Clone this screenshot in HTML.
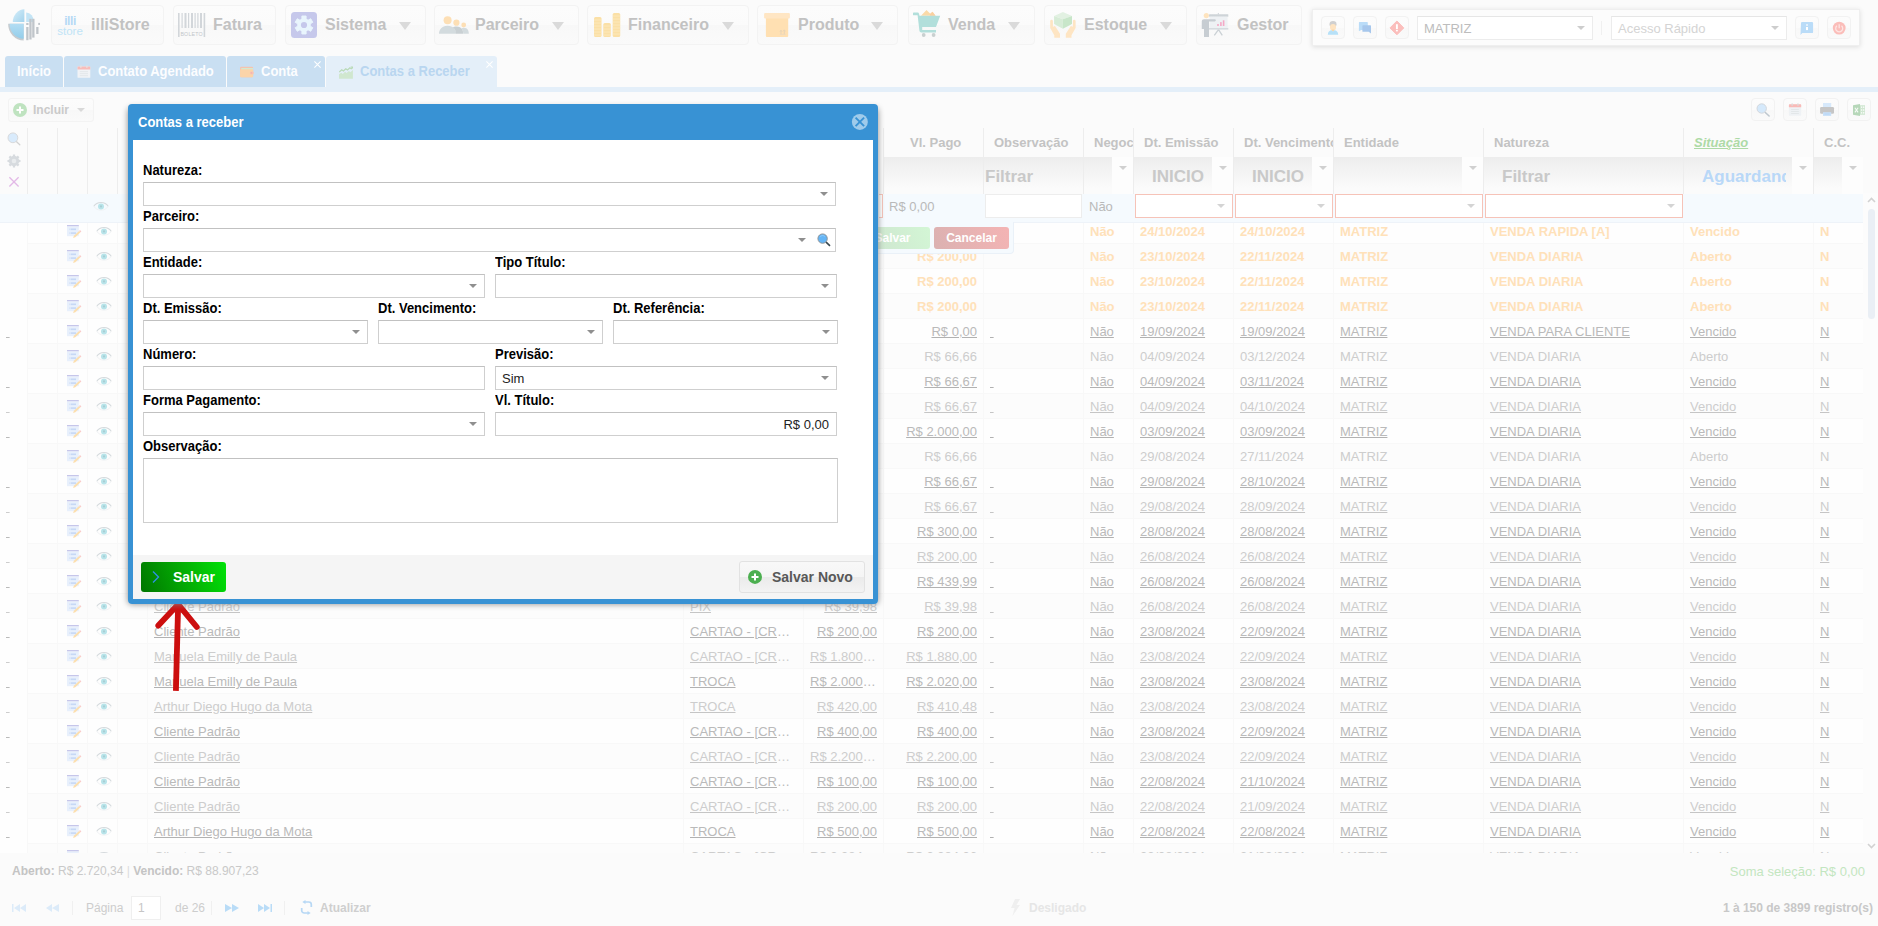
<!DOCTYPE html><html lang="pt-BR"><head><meta charset="utf-8"><title>Contas a Receber</title><style>
*{box-sizing:border-box;margin:0;padding:0}
html,body{width:1878px;height:926px;overflow:hidden;background:#fbfbfb;font-family:"Liberation Sans",Arial,sans-serif;font-size:13px;color:#b3b3b3}
.abs{position:absolute}
#page{position:relative;width:1878px;height:926px;overflow:hidden;background:#fbfbfb}
/* top nav */
.nb{position:absolute;top:5px;height:40px;border:1px solid #f3f3f3;border-radius:4px;background:linear-gradient(#fcfcfc,#fbfbfb 50%,#f8f8f8 51%,#fafafa);margin-left:1px}
.nb>*{margin-left:-1px}
.nb .t{position:absolute;top:0;line-height:37px;font-size:16px;font-weight:bold;color:#c2c2c2;white-space:nowrap}
.nb .ar{position:absolute;top:16px;width:0;height:0;border-left:6px solid transparent;border-right:6px solid transparent;border-top:8px solid #dadada}
.nb svg{position:absolute}
/* tabs */
.tab{position:absolute;top:56px;height:31px;background:#c9dff2;border-radius:3px 3px 0 0;color:#fcfdff;font-weight:bold;font-size:13px;line-height:31px;white-space:nowrap}
.tab>span.abs{transform:scaleY(1.08);transform-origin:0 19.800px}
.tab.act{background:#e4eff9;color:#b9d6f0;height:32px}
.tab .x{position:absolute;top:-7px;right:3px;font-size:11px;font-weight:normal;color:#fff}
/* grid */
.hd{position:absolute;top:128px;height:29px;line-height:30px;font-weight:bold;font-size:13px;color:#c3c3c3;white-space:nowrap;overflow:hidden;border-left:1px solid #ededed}
.fl{position:absolute;top:157px;height:37px;background:linear-gradient(#ededed,#fbfbfb 85%);border-left:1px solid #ededed;overflow:hidden;white-space:nowrap}
.fl .ph{position:absolute;top:0;line-height:40px;font-size:17px;font-weight:bold;color:#c9c9c9;letter-spacing:0}
.fl .tr{position:absolute;top:0;right:0;width:21px;height:37px;background:#fdfdfd}
.tri{position:absolute;width:0;height:0;border-left:4px solid transparent;border-right:4px solid transparent;border-top:4px solid #d0d0d0}
.row{position:absolute;left:27px;width:1836px;height:25px;border-top:1px solid #f8f8f8;background:#fefefe}
.row.alt{background:#fcfcfc}
.c{position:absolute;top:0;height:25px;line-height:26px;font-size:13px;white-space:nowrap;overflow:hidden;text-overflow:ellipsis;padding:0 6px 0 6px;border-left:1px solid #f8f8f8}
.u span{text-decoration:underline}
.r{text-align:right}
.dk{color:#bababa}.lt{color:#cdcdcd}
.dk.u span{text-decoration-color:#b1b1b1}.lt.u span{text-decoration-color:#c5c5c5}
.or{color:#ffe1b9;font-weight:bold}
.ic{position:absolute}
/* modal */
#win{position:absolute;left:128px;top:104px;width:750px;height:500px;background:#3892d4;border-radius:4px;}
#win .title{position:absolute;left:10px;top:11px;font-size:13px;font-weight:bold;color:#fff;line-height:16px;transform:scaleY(1.13);transform-origin:0 12.500px}
#win .body{position:absolute;left:5px;top:36px;width:740px;height:415px;background:#fff}
#win .foot{position:absolute;left:5px;top:451px;width:740px;height:44px;background:#f5f5f5}
.lb{position:absolute;margin-top:1px;font-size:13px;font-weight:bold;color:#000;line-height:14px;white-space:nowrap;transform:scaleY(1.1);transform-origin:0 11.300px}
.in{position:absolute;height:24px;border:1px solid #cfcfcf;border-top-color:#c1c1c1;background:#fff}
.in .tri{border-top-color:#8f8f8f;border-left-width:4px;border-right-width:4px;border-top-width:4px}
.in .v{position:absolute;top:0;line-height:24px;font-size:13px;color:#222}
</style></head><body><div id="page">
<svg class="abs" style="left:7px;top:8px" width="35" height="35" viewBox="7 8 35 35"><defs><linearGradient id="lg" x1="0" y1="0" x2="1" y2="1"><stop offset="0" stop-color="#d6eefa"/><stop offset="1" stop-color="#a3d3ec"/></linearGradient><linearGradient id="lg2" x1="0" y1="0" x2="0" y2="1"><stop offset="0" stop-color="#b3ddf3"/><stop offset="1" stop-color="#93cdea"/></linearGradient></defs><path d="M23.700 23.800H8.200A16 16.400 0 0 0 23.700 40.600z" fill="#c6cbcf"/><path d="M23.700 23.800H9.600A14.500 14.800 0 0 0 23.700 38.800z" fill="url(#lg2)"/><path d="M24.400 21.900V9.300A12.200 12.600 0 0 0 12.800 21.900z" fill="url(#lg)"/><path d="M26.200 21.900V12.400A8 9.500 0 0 1 33.900 21.900z" fill="#c3e4f5"/><g fill="#c0c5ca"><rect x="26.200" y="27" width="2.300" height="13.200"/><rect x="29.300" y="18.800" width="2.300" height="20.700"/><rect x="32.200" y="18.800" width="2.300" height="18.800"/><rect x="36.200" y="27" width="2.300" height="7"/><rect x="38.200" y="22.900" width="1.800" height="2"/><rect x="26.200" y="23" width="2.300" height="2"/></g></svg>
<div class="nb" style="left:50px;width:113px"><svg style="left:5px;top:9px" width="28" height="22" viewBox="0 0 28 22"><text x="14" y="9.800" font-family="Liberation Sans" font-size="12" font-weight="bold" fill="#b4d9f5" text-anchor="middle" letter-spacing="-.4">illi</text><text x="1.200" y="19.600" font-family="Liberation Sans" font-size="10" fill="#c0e4f7" textLength="25.600" lengthAdjust="spacingAndGlyphs">store</text></svg><span class="t" style="left:40px">illiStore</span></div>
<div class="nb" style="left:172px;width:103px"><svg style="left:5px;top:7px" width="28" height="25" viewBox="0 0 28 25"><g fill="#d2d6da"><rect x="0" y="0" width="1.600" height="24"/><rect x="3.500" y="0" width="1.200" height="15"/><rect x="6.500" y="0" width="2" height="15"/><rect x="10" y="0" width="1.200" height="15"/><rect x="13" y="0" width="2" height="15"/><rect x="16.500" y="0" width="1.200" height="15"/><rect x="19.300" y="0" width="1.200" height="15"/><rect x="22" y="0" width="2" height="15"/><rect x="25.600" y="0" width="1.600" height="24"/></g><text x="13.600" y="22.800" font-family="Liberation Sans" font-size="5.300" fill="#c2c6ca" text-anchor="middle" letter-spacing=".15">BOLETO</text></svg><span class="t" style="left:40px">Fatura</span></div>
<div class="nb" style="left:284px;width:141px"><svg style="left:6px;top:6px" width="26" height="26" viewBox="0 0 26 26"><rect width="26" height="26" rx="3.500" fill="#c6c8eb"/><path d="M15.07 18.84L15.11 21.95L10.89 21.95L10.93 18.84L8.97 17.71L6.30 19.30L4.19 15.65L6.90 14.13L6.90 11.87L4.19 10.35L6.30 6.70L8.97 8.29L10.93 7.16L10.89 4.05L15.11 4.05L15.07 7.16L17.03 8.29L19.70 6.70L21.81 10.35L19.10 11.87L19.10 14.13L21.81 15.65L19.70 19.30L17.03 17.71z" fill="#e9f5fd" stroke="#e9f5fd" stroke-width="1" stroke-linejoin="round"/><circle cx="13" cy="13" r="6.400" fill="#e9f5fd"/><circle cx="13" cy="13" r="3.100" fill="#c6c8eb"/></svg><span class="t" style="left:40px">Sistema</span><i class="ar" style="left:114px"></i></div>
<div class="nb" style="left:433px;width:145px"><svg style="left:5px;top:10px" width="32" height="20" viewBox="0 0 32 20"><circle cx="8.600" cy="4.200" r="4" fill="#fddfb5"/><circle cx="17.400" cy="6.700" r="3.100" fill="#fddfb5"/><circle cx="24.700" cy="9" r="2.400" fill="#fddfb5"/><path d="M0 17.800c0-1 0-2.300 1-4 1.500-2.700 4.500-4 7.600-4s6 1.300 7.500 4c1 1.700 1 3 1 4z" fill="#d3dbde"/><path d="M13.500 11.600c1.200-.9 2.500-1.200 3.900-1.200 2.600 0 4.800 1.100 5.900 3.200.8 1.500.8 2.900.8 4.200H17c0-1.500-.3-2.800-1-4-.6-1-1.300-1.700-2.500-2.200z" fill="#c9d0d3"/><path d="M22.300 12.400c.7-.4 1.500-.6 2.400-.6 1.900 0 3.500.8 4.400 2.400.6 1.100.7 2.400.7 3.600h-5.600c0-1.300 0-2.600-.7-3.900-.3-.6-.7-1.100-1.200-1.500z" fill="#d3dbde"/></svg><span class="t" style="left:41px">Parceiro</span><i class="ar" style="left:118px"></i></div>
<div class="nb" style="left:586px;width:162px"><svg style="left:7px;top:7px" width="28" height="26" viewBox="0 0 28 26"><g fill="#fbe0a6"><rect x="0" y="4" width="7.500" height="20" rx="1.500"/><rect x="9.300" y="10" width="7.500" height="14" rx="1.500"/><rect x="18.700" y="0" width="7.500" height="24" rx="1.500"/></g><g stroke="#fdebc4" stroke-width=".7"><path d="M0 7h7.500M0 10h7.500M0 13h7.500M0 16h7.500M0 19h7.500M0 22h7.500M9.300 13h7.500M9.300 16h7.500M9.300 19h7.500M9.300 22h7.500M18.700 3h7.500M18.700 6h7.500M18.700 9h7.500M18.700 12h7.500M18.700 15h7.500M18.700 18h7.500M18.700 21h7.500"/></g></svg><span class="t" style="left:41px">Financeiro</span><i class="ar" style="left:135px"></i></div>
<div class="nb" style="left:756px;width:141px"><svg style="left:7px;top:7px" width="26" height="24" viewBox="0 0 26 24"><rect x="1.900" y="4" width="22.300" height="20" rx="1" fill="#ffe0b2"/><rect x=".1" y="0" width="25.800" height="5.400" rx="1" fill="#ffe6c4"/><path d="M17 21.200V17.800M16 18.600l1-1.400 1 1.400M20.300 21.200V17.300M19.200 18.300l1.100-1.500 1.100 1.500" stroke="#e4d2b8" stroke-width=".9" fill="none"/><rect x="15.800" y="20.900" width="5.800" height=".8" fill="#ead9c0"/></svg><span class="t" style="left:41px">Produto</span><i class="ar" style="left:114px"></i></div>
<div class="nb" style="left:907px;width:127px"><svg style="left:5px;top:4px" width="28" height="28" viewBox="0 0 28 28"><path d="M8 5.800L13.500 0l3.800 3.800 2.200-2 3 4z" fill="#fbdaa8"/><path d="M17 4l2.500-2.200 3 4H17z" fill="#fad0a0"/><path d="M1 2.400h3.600c.8 0 1.300.6 1.400 1.300L6.500 5.800h20.700L23 17H9.200v2.900H23v2.500H8.300c-1.100 0-1.900-.9-1.900-1.900L4.600 5.300H1a1 1 0 0 1 0-2.900z" fill="#b2dfdb"/><circle cx="10.700" cy="25" r="1.900" fill="#c9d0d0"/><circle cx="20.600" cy="25" r="1.900" fill="#c9d0d0"/></svg><span class="t" style="left:40px">Venda</span><i class="ar" style="left:100px"></i></div>
<div class="nb" style="left:1043px;width:143px"><svg style="left:5px;top:5px" width="28" height="28" viewBox="0 0 28 28"><path d="M13.900.900L23 5l-9.100 3.200L5.060 5z" fill="#e2f1e2"/><path d="M5.060 5l8.840 3.200v9.500l-8.840-4.750z" fill="#d7ecd7"/><path d="M23 5l-9.100 3.200v9.500L23 12.950z" fill="#c8e6c9"/><path d="M1.200 10.200a1.350 1.350 0 0 1 2.700 0v5.500l2.100-.7 5 7.700v4.100H5.300v-2.500L1.200 17z" fill="#fee5c3"/><path d="M26.600 10.200a1.350 1.350 0 0 0-2.700 0v5.500l-2.100-.7-5 7.700v4.100h5.700v-2.500L26.600 17z" fill="#fee5c3"/></svg><span class="t" style="left:40px">Estoque</span><i class="ar" style="left:116px"></i></div>
<div class="nb" style="left:1195px;width:106px"><svg style="left:5px;top:6px" width="28" height="26" viewBox="0 0 28 26"><rect x="16.800" y="1.200" width="1.200" height="1.200" fill="#cdd3d7"/><rect x="8" y="2.200" width="19.300" height="2.500" rx=".5" fill="#ced4d8"/><rect x="8.500" y="4.700" width="18.100" height="11.300" fill="#eef1f4"/><rect x="8" y="16" width="19.300" height="1.600" fill="#d6dbdf"/><path d="M17.500 17.600L13.300 23.300M17.500 17.600l3.800 5.700" stroke="#cbd1d5" stroke-width="1.300" fill="none"/><g fill="#f4a9c6"><rect x="16.200" y="12" width="1.600" height="2"/><rect x="19.100" y="10.100" width="1.600" height="3.900"/><rect x="21.800" y="8.300" width="1.600" height="5.700"/></g><circle cx="5.300" cy="3.600" r="2.600" fill="#fee4bf"/><path d="M.75 9.400c0-1.300 1-2.200 2.250-2.200h10.700a1.150 1.150 0 0 1 0 2.300H8v15.400H3v-8H.75z" fill="#c7cdd2"/></svg><span class="t" style="left:41px">Gestor</span></div>
<div class="abs" style="left:1312px;top:9px;width:548px;height:37px;background:#fcfcfc;border:1px solid #efefef;box-shadow:0 1px 5px rgba(0,0,0,.12)"></div>
<div class="abs" style="left:1321px;top:16px;width:24px;height:23px;border:1px solid #f2f2f2;border-radius:4px;background:linear-gradient(#fcfcfc,#fbfbfb 50%,#f8f8f8 51%,#fafafa);overflow:hidden"><svg class="abs" style="left:0;top:0" width="22" height="21" viewBox="1322 17 22 21"><ellipse cx="1333" cy="24.300" rx="3.500" ry="3.300" fill="#d0d0d0"/><ellipse cx="1333" cy="27.200" rx="3" ry="3.300" fill="#fee4c2"/><rect x="1331.800" y="29.500" width="2.400" height="2" fill="#fbd5a5"/><path d="M1327.800 34.800c0-3 1.800-4.300 3.800-4.500l1.400 1.200 1.400-1.200c2 .2 3.800 1.500 3.800 4.500z" fill="#b7e1f8"/></svg></div>
<div class="abs" style="left:1353px;top:16px;width:24px;height:23px;border:1px solid #f2f2f2;border-radius:4px;background:linear-gradient(#fcfcfc,#fbfbfb 50%,#f8f8f8 51%,#fafafa);overflow:hidden"><svg class="abs" style="left:0;top:0" width="22" height="21" viewBox="1354 17 22 21"><path d="M1358.900 22.700a.6.600 0 0 1 .6-.6h7.700a.6.600 0 0 1 .6.600v7.200h-6.600l-2.300 1.300z" fill="#badcf8"/><path d="M1362.400 25.900a.6.600 0 0 1 .6-.6h7.400a.6.600 0 0 1 .6.600v7.700l-2.300-1.800h-5.700a.6.600 0 0 1-.6-.6z" fill="#a7c7ec"/></svg></div>
<div class="abs" style="left:1385px;top:16px;width:24px;height:23px;border:1px solid #f2f2f2;border-radius:4px;background:linear-gradient(#fcfcfc,#fbfbfb 50%,#f8f8f8 51%,#fafafa);overflow:hidden"><svg class="abs" style="left:0;top:0" width="22" height="21" viewBox="1386 17 22 21"><path d="M1396.900 21l6.900 6.900-6.900 6.900-6.900-6.900z" fill="#fbbebc" stroke="#fbbebc" stroke-width="1" stroke-linejoin="round"/><rect x="1395.950" y="24.200" width="1.900" height="4.900" fill="#fff"/><rect x="1395.950" y="29.900" width="1.900" height="1.500" fill="#fff"/></svg></div>
<div class="abs" style="left:1417px;top:16px;width:176px;height:24px;border:1px solid #ececec;border-top-color:#e6e6e6;background:#fff"><span class="abs" style="left:6px;top:0;line-height:23px;font-size:13px;color:#bdbdbd">MATRIZ</span><i class="tri" style="right:7px;top:9px;border-top-color:#cdcdcd;border-left-width:4px;border-right-width:4px;border-top-width:4px"></i></div>
<div class="abs" style="left:1601px;top:21px;width:1px;height:14px;background:#f0f0f0"></div>
<div class="abs" style="left:1611px;top:16px;width:176px;height:24px;border:1px solid #ececec;border-top-color:#e6e6e6;background:#fff"><span class="abs" style="left:6px;top:0;line-height:23px;font-size:13px;color:#d4d4d4">Acesso Rápido</span><i class="tri" style="right:7px;top:9px;border-top-color:#cdcdcd;border-left-width:4px;border-right-width:4px;border-top-width:4px"></i></div>
<div class="abs" style="left:1795px;top:16px;width:24px;height:23px;border:1px solid #f2f2f2;border-radius:4px;background:linear-gradient(#fcfcfc,#fbfbfb 50%,#f8f8f8 51%,#fafafa);overflow:hidden"><svg class="abs" style="left:0;top:0" width="22" height="21" viewBox="1796 17 22 21"><path d="M1801 23.100a1.200 1.200 0 0 1 1.200-1.200h9.700a1.200 1.200 0 0 1 1.200 1.200v8.800a1.200 1.200 0 0 1-1.200 1.200h-9.600l-1.800 1.900z" fill="#badcf8"/><rect x="1806" y="24.200" width="2" height="1.600" fill="#e9f4fd"/><rect x="1806" y="27" width="2" height="3.100" fill="#fff"/></svg></div>
<div class="abs" style="left:1827px;top:16px;width:24px;height:23px;border:1px solid #f2f2f2;border-radius:4px;background:linear-gradient(#fcfcfc,#fbfbfb 50%,#f8f8f8 51%,#fafafa);overflow:hidden"><svg class="abs" style="left:0;top:0" width="22" height="21" viewBox="1828 17 22 21"><circle cx="1839.200" cy="28.100" r="6.400" fill="#fbbdb9"/><path d="M1836.900 25.700a3.500 3.500 0 1 0 4.600 0" fill="none" stroke="#fde5e3" stroke-width="1.300"/><path d="M1839.200 24.300v4" stroke="#fde5e3" stroke-width="1.300"/></svg></div>
<div class="abs" style="left:0;top:87px;width:1878px;height:5px;background:#e4eff9"></div>
<div class="tab" style="left:5px;width:58px"><span class="abs" style="left:12px">Início</span></div>
<div class="tab" style="left:64px;width:162px"><svg class="abs" style="left:13px;top:8px" width="14" height="15" viewBox="0 0 14 15"><rect x=".5" y="2.400" width="12.800" height="11.400" rx=".6" fill="#f1f3f6"/><path d="M.5 3a.6.600 0 0 1 .6-.6h11.600a.6.600 0 0 1 .6.600v2.400H.5z" fill="#f8bcb9"/><rect x="3.200" y="1.400" width="1.300" height="2.400" fill="#e3e3e3"/><rect x="9.200" y="1.400" width="1.300" height="2.400" fill="#e3e3e3"/><path d="M2.800 7.700h8.200M2.800 9.700h8.200M2.800 11.700h8.200" stroke="#e2e5e9" stroke-width=".9"/></svg><span class="abs" style="left:34px">Contato Agendado</span></div>
<div class="tab" style="left:227px;width:98px"><svg class="abs" style="left:13px;top:10px" width="15" height="12" viewBox="0 0 15 12"><rect x=".1" y=".8" width="13" height="10.400" rx="1.200" fill="#f5c3ae"/><rect x="1.200" y="2" width="11.800" height="2" fill="#d3e9d2"/><rect x=".1" y="3.200" width="13" height="8" rx="1" fill="#fbd4a9"/><rect x="9.800" y="5.400" width="4.100" height="3" rx="1.400" fill="#f9c6b4"/><circle cx="11.500" cy="6.900" r=".9" fill="#f3b3b3"/></svg><span class="abs" style="left:34px">Conta</span><svg class="abs" style="right:4.400px;top:5.300px" width="7" height="7" viewBox="0 0 7 7"><path d="M.4.400l6.200 6.200M6.600.4L.4 6.600" stroke="#fff" stroke-width="1.050"/></svg></div>
<div class="tab act" style="left:326px;width:171px"><svg class="abs" style="left:13px;top:10px" width="15" height="13" viewBox="0 0 15 13"><path d="M0 12.700V8.300l2.200-1.600 1.600 1.200L6 5.800l1.600 1.300 2.300-2 1.500 1.100 2.500-2.300v8.800z" fill="#d0e7cf"/><path d="M.3 6l2.400-2.200 1.700 1.200 2.400-2.300 1.700 1.300 2.400-2.200 1.300 1 1.500-1.600" fill="none" stroke="#b9dab6" stroke-width="1.200"/><path d="M11.500.6l2.400-.1-.1 2.400z" fill="#b9dab6"/></svg><span class="abs" style="left:34px">Contas a Receber</span><svg class="abs" style="right:4.400px;top:5.300px" width="7" height="7" viewBox="0 0 7 7"><path d="M.4.400l6.200 6.200M6.600.4L.4 6.600" stroke="#fff" stroke-width="1.050"/></svg></div>
<div class="abs" style="left:8px;top:98px;width:86px;height:24px;border:1px solid #f3f3f3;border-radius:3px;background:linear-gradient(#fcfcfc,#fbfbfb 50%,#f8f8f8 51%,#fafafa)"><svg class="abs" style="left:4px;top:4px" width="14" height="14" viewBox="0 0 14 14"><circle cx="7" cy="7" r="7" fill="#bfe3c0"/><path d="M7 3.500v7M3.500 7h7" stroke="#fff" stroke-width="2"/></svg><span class="abs" style="left:24px;top:0;line-height:22px;font-size:12px;font-weight:bold;color:#cacaca">Incluir</span><i class="tri" style="left:68px;top:9px;border-top-color:#d9d9d9"></i></div>
<div class="abs" style="left:1751px;top:98px;width:24px;height:23px;border:1px solid #f2f2f2;border-radius:4px;background:linear-gradient(#fcfcfc,#fbfbfb 50%,#f8f8f8 51%,#fafafa);overflow:hidden"><svg class="abs" style="left:0;top:0" width="22" height="21" viewBox="1752 99 22 21"><path d="M1765.300 112.500l3.800 3.500" stroke="#bfc8cf" stroke-width="1.600" stroke-linecap="round"/><circle cx="1761.700" cy="108.500" r="4.700" fill="#d5e9fb" stroke="#d0d4d8" stroke-width=".9"/></svg></div>
<div class="abs" style="left:1783px;top:98px;width:24px;height:23px;border:1px solid #f2f2f2;border-radius:4px;background:linear-gradient(#fcfcfc,#fbfbfb 50%,#f8f8f8 51%,#fafafa);overflow:hidden"><svg class="abs" style="left:0;top:0" width="22" height="21" viewBox="1784 99 22 21"><rect x="1788.900" y="104.300" width="12.300" height="11.400" rx=".6" fill="#eff2f5"/><path d="M1788.900 104.900a.6.600 0 0 1 .6-.6h11.100a.6.600 0 0 1 .6.600v2.300h-12.300z" fill="#f9bab7"/><rect x="1791.500" y="103.400" width="1.300" height="2.400" fill="#dcdcdc"/><rect x="1797.300" y="103.400" width="1.300" height="2.400" fill="#dcdcdc"/><path d="M1791.100 109.500h7.800M1791.100 111.500h7.800M1791.100 113.500h7.800" stroke="#e1e5e8" stroke-width=".9"/></svg></div>
<div class="abs" style="left:1815px;top:98px;width:24px;height:23px;border:1px solid #f2f2f2;border-radius:4px;background:linear-gradient(#fcfcfc,#fbfbfb 50%,#f8f8f8 51%,#fafafa);overflow:hidden"><svg class="abs" style="left:0;top:0" width="22" height="21" viewBox="1816 99 22 21"><rect x="1823" y="103" width="8.200" height="4.500" fill="#d7e9fb"/><rect x="1820.100" y="107.100" width="13.900" height="6.700" rx="1.200" fill="#c6c6c6"/><rect x="1823" y="112.200" width="8.200" height="3.700" fill="#c7dff8"/><rect x="1824.500" y="113.600" width="5.200" height=".8" fill="#b5d2f3"/></svg></div>
<div class="abs" style="left:1847px;top:98px;width:24px;height:23px;border:1px solid #f2f2f2;border-radius:4px;background:linear-gradient(#fcfcfc,#fbfbfb 50%,#f8f8f8 51%,#fafafa);overflow:hidden"><svg class="abs" style="left:0;top:0" width="22" height="21" viewBox="1848 99 22 21"><rect x="1859" y="105.200" width="6" height="9.600" fill="#d0e6d1"/><g fill="#f4faf4"><rect x="1861" y="106.400" width="1.200" height="1.600"/><rect x="1863" y="106.400" width="1.300" height="1.600"/><rect x="1861" y="109.200" width="1.200" height="1.600"/><rect x="1863" y="109.200" width="1.300" height="1.600"/><rect x="1861" y="112" width="1.200" height="1.600"/><rect x="1863" y="112" width="1.300" height="1.600"/></g><path d="M1853 105.200l7-1.100v11.800l-7-1.100z" fill="#b6d7b9"/><path d="M1854.900 107.800l3.200 4.600M1858.100 107.800l-3.200 4.600" stroke="#f4faf4" stroke-width="1.100"/></svg></div>
<svg class="abs" style="left:4px;top:130px" width="20" height="60" viewBox="4 130 20 60"><path d="M16.300 141.500l3.500 3.300" stroke="#d2d2d2" stroke-width="1.300" stroke-linecap="round"/><circle cx="12.900" cy="137.800" r="4.900" fill="#d9ebfc" stroke="#d6d6d6" stroke-width=".9"/><path d="M18.76 159.86L20.51 159.90L20.51 162.10L18.76 162.14L18.18 163.56L19.38 164.83L17.83 166.38L16.56 165.18L15.14 165.76L15.10 167.51L12.90 167.51L12.86 165.76L11.44 165.18L10.17 166.38L8.62 164.83L9.82 163.56L9.24 162.14L7.49 162.10L7.49 159.90L9.24 159.86L9.82 158.44L8.62 157.17L10.17 155.62L11.44 156.82L12.86 156.24L12.90 154.49L15.10 154.49L15.14 156.24L16.56 156.82L17.83 155.62L19.38 157.17L18.18 158.44z" fill="#d7dbdf"/><circle cx="14" cy="161" r="5" fill="#d7dbdf"/><circle cx="14" cy="161" r="2.300" fill="#e9ecee"/><path d="M9.400 177.200l9.200 9.300M18.600 177.200l-9.200 9.300" stroke="#e3b9e7" stroke-width="1.300"/></svg>
<div class="hd" style="left:27px;width:30px"></div>
<div class="hd" style="left:57px;width:30px"></div>
<div class="hd" style="left:87px;width:30px"></div>
<div class="hd" style="left:117px;width:30px"></div>
<div class="hd" style="left:883px;width:100px"><span class="abs" style="left:26px">Vl. Pago</span></div>
<div class="hd" style="left:983px;width:100px"><span class="abs" style="left:10px">Observação</span></div>
<div class="hd" style="left:1083px;width:50px"><span class="abs" style="left:10px">Negoc</span></div>
<div class="hd" style="left:1133px;width:100px"><span class="abs" style="left:10px">Dt. Emissão</span></div>
<div class="hd" style="left:1233px;width:100px"><span class="abs" style="left:10px">Dt. Vencimento</span></div>
<div class="hd" style="left:1333px;width:150px"><span class="abs" style="left:10px">Entidade</span></div>
<div class="hd" style="left:1483px;width:200px"><span class="abs" style="left:10px">Natureza</span></div>
<div class="hd" style="left:1683px;width:130px"><span class="abs" style="left:10px;font-size:13px;font-weight:bold;font-style:italic;text-decoration:underline;color:#addaa6">Situação</span></div>
<div class="hd" style="left:1813px;width:50px"><span class="abs" style="left:10px">C.C.</span></div>
<div class="abs" style="left:27px;top:157px;width:1px;height:37px;background:#ededed"></div>
<div class="abs" style="left:57px;top:157px;width:1px;height:37px;background:#ededed"></div>
<div class="abs" style="left:87px;top:157px;width:1px;height:37px;background:#ededed"></div>
<div class="abs" style="left:117px;top:157px;width:1px;height:37px;background:#ededed"></div>
<div class="fl" style="left:883px;width:100px"></div>
<div class="fl" style="left:983px;width:100px"><span class="ph" style="left:1px">Filtrar</span></div>
<div class="fl" style="left:1083px;width:50px"><div class="tr"><i class="tri" style="left:7px;top:9px"></i></div></div>
<div class="fl" style="left:1133px;width:100px"><span class="ph" style="left:18px">INICIO</span><div class="tr"><i class="tri" style="left:7px;top:9px"></i></div></div>
<div class="fl" style="left:1233px;width:100px"><span class="ph" style="left:18px">INICIO</span><div class="tr"><i class="tri" style="left:7px;top:9px"></i></div></div>
<div class="fl" style="left:1333px;width:150px"><div class="tr"><i class="tri" style="left:7px;top:9px"></i></div></div>
<div class="fl" style="left:1483px;width:200px"><span class="ph" style="left:18px">Filtrar</span></div>
<div class="fl" style="left:1683px;width:130px"><span class="ph" style="left:18px;color:#b9d8f8;width:84px;overflow:hidden">Aguardando</span><div class="tr"><i class="tri" style="left:7px;top:9px"></i></div></div>
<div class="fl" style="left:1813px;width:50px"><div class="tr"><i class="tri" style="left:7px;top:9px"></i></div></div>
<div class="abs" style="left:0;top:219px;width:1863px;height:634px;overflow:hidden;background:#fefefe">
<div class="row or" style="top:-1px"><div class="c" style="left:0px;width:30px;padding:0"></div><div class="c" style="left:30px;width:30px;padding:0"></div><div class="c" style="left:60px;width:30px;padding:0"></div><div class="c" style="left:90px;width:30px;padding:0"></div><svg class="ic" style="left:40px;top:6px" width="15" height="14" viewBox="0 0 15 14"><rect x="0" y="0" width="11.800" height="1.500" fill="#c6c6ea"/><rect x="0" y="1.500" width="11.800" height="9.700" fill="#e8f0fc"/><rect x="3.600" y="3.500" width="5.400" height="1.600" fill="#c6d8f5"/><rect x="3.600" y="7.300" width="5.400" height="1.600" fill="#c6d8f5"/><rect x="2" y="3.500" width=".8" height="1.600" fill="#d5e2f8"/><rect x="2" y="7.300" width=".8" height="1.600" fill="#d5e2f8"/><path d="M6.100 13l.8-2.200 5.200-4.900 1.400 1.400-5.200 4.900z" fill="#fcdfae"/><path d="M12.100 5.900l.9-.9 1.400 1.400-.9.900z" fill="#f8caca"/></svg><svg class="ic" style="left:69px;top:7px" width="16" height="11" viewBox="0 0 16 11"><path d="M.8 5.300C4 .2 12 .2 15.200 5.300" fill="none" stroke="#d5dadd" stroke-width="1.100"/><path d="M.8 5.300C4 10.500 12 10.500 15.200 5.300" fill="none" stroke="#eceff1" stroke-width=".8"/><circle cx="8" cy="5.400" r="3" fill="#b8e4ea"/><circle cx="8" cy="5.400" r="1.100" fill="#a9cdd3"/></svg><div class="c" style="left:120px;width:536px"></div><div class="c" style="left:656px;width:120px"></div><div class="c r" style="left:776px;width:80px"></div><div class="c r" style="left:856px;width:100px"></div><div class="c" style="left:956px;width:100px"><span> </span></div><div class="c" style="left:1056px;width:50px"><span>Não</span></div><div class="c" style="left:1106px;width:100px"><span>24/10/2024</span></div><div class="c" style="left:1206px;width:100px"><span>24/10/2024</span></div><div class="c" style="left:1306px;width:150px"><span>MATRIZ</span></div><div class="c" style="left:1456px;width:200px"><span>VENDA RAPIDA [A]</span></div><div class="c" style="left:1656px;width:130px"><span>Vencido</span></div><div class="c" style="left:1786px;width:50px"><span>N</span></div></div>
<div class="row or alt" style="top:24px"><div class="c" style="left:0px;width:30px;padding:0"></div><div class="c" style="left:30px;width:30px;padding:0"></div><div class="c" style="left:60px;width:30px;padding:0"></div><div class="c" style="left:90px;width:30px;padding:0"></div><svg class="ic" style="left:40px;top:6px" width="15" height="14" viewBox="0 0 15 14"><rect x="0" y="0" width="11.800" height="1.500" fill="#c6c6ea"/><rect x="0" y="1.500" width="11.800" height="9.700" fill="#e8f0fc"/><rect x="3.600" y="3.500" width="5.400" height="1.600" fill="#c6d8f5"/><rect x="3.600" y="7.300" width="5.400" height="1.600" fill="#c6d8f5"/><rect x="2" y="3.500" width=".8" height="1.600" fill="#d5e2f8"/><rect x="2" y="7.300" width=".8" height="1.600" fill="#d5e2f8"/><path d="M6.100 13l.8-2.200 5.200-4.900 1.400 1.400-5.200 4.900z" fill="#fcdfae"/><path d="M12.100 5.900l.9-.9 1.400 1.400-.9.900z" fill="#f8caca"/></svg><svg class="ic" style="left:69px;top:7px" width="16" height="11" viewBox="0 0 16 11"><path d="M.8 5.300C4 .2 12 .2 15.200 5.300" fill="none" stroke="#d5dadd" stroke-width="1.100"/><path d="M.8 5.300C4 10.500 12 10.500 15.200 5.300" fill="none" stroke="#eceff1" stroke-width=".8"/><circle cx="8" cy="5.400" r="3" fill="#b8e4ea"/><circle cx="8" cy="5.400" r="1.100" fill="#a9cdd3"/></svg><div class="c" style="left:120px;width:536px"></div><div class="c" style="left:656px;width:120px"></div><div class="c r" style="left:776px;width:80px"></div><div class="c r" style="left:856px;width:100px"><span>R$ 200,00</span></div><div class="c" style="left:956px;width:100px"></div><div class="c" style="left:1056px;width:50px"><span>Não</span></div><div class="c" style="left:1106px;width:100px"><span>23/10/2024</span></div><div class="c" style="left:1206px;width:100px"><span>22/11/2024</span></div><div class="c" style="left:1306px;width:150px"><span>MATRIZ</span></div><div class="c" style="left:1456px;width:200px"><span>VENDA DIARIA</span></div><div class="c" style="left:1656px;width:130px"><span>Aberto</span></div><div class="c" style="left:1786px;width:50px"><span>N</span></div></div>
<div class="row or" style="top:49px"><div class="c" style="left:0px;width:30px;padding:0"></div><div class="c" style="left:30px;width:30px;padding:0"></div><div class="c" style="left:60px;width:30px;padding:0"></div><div class="c" style="left:90px;width:30px;padding:0"></div><svg class="ic" style="left:40px;top:6px" width="15" height="14" viewBox="0 0 15 14"><rect x="0" y="0" width="11.800" height="1.500" fill="#c6c6ea"/><rect x="0" y="1.500" width="11.800" height="9.700" fill="#e8f0fc"/><rect x="3.600" y="3.500" width="5.400" height="1.600" fill="#c6d8f5"/><rect x="3.600" y="7.300" width="5.400" height="1.600" fill="#c6d8f5"/><rect x="2" y="3.500" width=".8" height="1.600" fill="#d5e2f8"/><rect x="2" y="7.300" width=".8" height="1.600" fill="#d5e2f8"/><path d="M6.100 13l.8-2.200 5.200-4.900 1.400 1.400-5.200 4.900z" fill="#fcdfae"/><path d="M12.100 5.900l.9-.9 1.400 1.400-.9.900z" fill="#f8caca"/></svg><svg class="ic" style="left:69px;top:7px" width="16" height="11" viewBox="0 0 16 11"><path d="M.8 5.300C4 .2 12 .2 15.200 5.300" fill="none" stroke="#d5dadd" stroke-width="1.100"/><path d="M.8 5.300C4 10.500 12 10.500 15.200 5.300" fill="none" stroke="#eceff1" stroke-width=".8"/><circle cx="8" cy="5.400" r="3" fill="#b8e4ea"/><circle cx="8" cy="5.400" r="1.100" fill="#a9cdd3"/></svg><div class="c" style="left:120px;width:536px"></div><div class="c" style="left:656px;width:120px"></div><div class="c r" style="left:776px;width:80px"></div><div class="c r" style="left:856px;width:100px"><span>R$ 200,00</span></div><div class="c" style="left:956px;width:100px"></div><div class="c" style="left:1056px;width:50px"><span>Não</span></div><div class="c" style="left:1106px;width:100px"><span>23/10/2024</span></div><div class="c" style="left:1206px;width:100px"><span>22/11/2024</span></div><div class="c" style="left:1306px;width:150px"><span>MATRIZ</span></div><div class="c" style="left:1456px;width:200px"><span>VENDA DIARIA</span></div><div class="c" style="left:1656px;width:130px"><span>Aberto</span></div><div class="c" style="left:1786px;width:50px"><span>N</span></div></div>
<div class="row or alt" style="top:74px"><div class="c" style="left:0px;width:30px;padding:0"></div><div class="c" style="left:30px;width:30px;padding:0"></div><div class="c" style="left:60px;width:30px;padding:0"></div><div class="c" style="left:90px;width:30px;padding:0"></div><svg class="ic" style="left:40px;top:6px" width="15" height="14" viewBox="0 0 15 14"><rect x="0" y="0" width="11.800" height="1.500" fill="#c6c6ea"/><rect x="0" y="1.500" width="11.800" height="9.700" fill="#e8f0fc"/><rect x="3.600" y="3.500" width="5.400" height="1.600" fill="#c6d8f5"/><rect x="3.600" y="7.300" width="5.400" height="1.600" fill="#c6d8f5"/><rect x="2" y="3.500" width=".8" height="1.600" fill="#d5e2f8"/><rect x="2" y="7.300" width=".8" height="1.600" fill="#d5e2f8"/><path d="M6.100 13l.8-2.200 5.200-4.900 1.400 1.400-5.200 4.900z" fill="#fcdfae"/><path d="M12.100 5.900l.9-.9 1.400 1.400-.9.900z" fill="#f8caca"/></svg><svg class="ic" style="left:69px;top:7px" width="16" height="11" viewBox="0 0 16 11"><path d="M.8 5.300C4 .2 12 .2 15.200 5.300" fill="none" stroke="#d5dadd" stroke-width="1.100"/><path d="M.8 5.300C4 10.500 12 10.500 15.200 5.300" fill="none" stroke="#eceff1" stroke-width=".8"/><circle cx="8" cy="5.400" r="3" fill="#b8e4ea"/><circle cx="8" cy="5.400" r="1.100" fill="#a9cdd3"/></svg><div class="c" style="left:120px;width:536px"></div><div class="c" style="left:656px;width:120px"></div><div class="c r" style="left:776px;width:80px"></div><div class="c r" style="left:856px;width:100px"><span>R$ 200,00</span></div><div class="c" style="left:956px;width:100px"></div><div class="c" style="left:1056px;width:50px"><span>Não</span></div><div class="c" style="left:1106px;width:100px"><span>23/10/2024</span></div><div class="c" style="left:1206px;width:100px"><span>22/11/2024</span></div><div class="c" style="left:1306px;width:150px"><span>MATRIZ</span></div><div class="c" style="left:1456px;width:200px"><span>VENDA DIARIA</span></div><div class="c" style="left:1656px;width:130px"><span>Aberto</span></div><div class="c" style="left:1786px;width:50px"><span>N</span></div></div>
<div class="row dk u" style="top:99px"><div class="c" style="left:0px;width:30px;padding:0"></div><div class="c" style="left:30px;width:30px;padding:0"></div><div class="c" style="left:60px;width:30px;padding:0"></div><div class="c" style="left:90px;width:30px;padding:0"></div><svg class="ic" style="left:40px;top:6px" width="15" height="14" viewBox="0 0 15 14"><rect x="0" y="0" width="11.800" height="1.500" fill="#c6c6ea"/><rect x="0" y="1.500" width="11.800" height="9.700" fill="#e8f0fc"/><rect x="3.600" y="3.500" width="5.400" height="1.600" fill="#c6d8f5"/><rect x="3.600" y="7.300" width="5.400" height="1.600" fill="#c6d8f5"/><rect x="2" y="3.500" width=".8" height="1.600" fill="#d5e2f8"/><rect x="2" y="7.300" width=".8" height="1.600" fill="#d5e2f8"/><path d="M6.100 13l.8-2.200 5.200-4.900 1.400 1.400-5.200 4.900z" fill="#fcdfae"/><path d="M12.100 5.900l.9-.9 1.400 1.400-.9.900z" fill="#f8caca"/></svg><svg class="ic" style="left:69px;top:7px" width="16" height="11" viewBox="0 0 16 11"><path d="M.8 5.300C4 .2 12 .2 15.200 5.300" fill="none" stroke="#d5dadd" stroke-width="1.100"/><path d="M.8 5.300C4 10.500 12 10.500 15.200 5.300" fill="none" stroke="#eceff1" stroke-width=".8"/><circle cx="8" cy="5.400" r="3" fill="#b8e4ea"/><circle cx="8" cy="5.400" r="1.100" fill="#a9cdd3"/></svg><div class="c" style="left:120px;width:536px"></div><div class="c" style="left:656px;width:120px"></div><div class="c r" style="left:776px;width:80px"></div><div class="c r" style="left:856px;width:100px"><span>R$ 0,00</span></div><div class="c" style="left:956px;width:100px"><span>&nbsp;</span></div><div class="c" style="left:1056px;width:50px"><span>Não</span></div><div class="c" style="left:1106px;width:100px"><span>19/09/2024</span></div><div class="c" style="left:1206px;width:100px"><span>19/09/2024</span></div><div class="c" style="left:1306px;width:150px"><span>MATRIZ</span></div><div class="c" style="left:1456px;width:200px"><span>VENDA PARA CLIENTE</span></div><div class="c" style="left:1656px;width:130px"><span>Vencido</span></div><div class="c" style="left:1786px;width:50px"><span>N</span></div></div>
<span class="abs dk" style="left:6px;top:101px;line-height:24px;text-decoration:underline">&nbsp;</span>
<div class="row lt alt" style="top:124px"><div class="c" style="left:0px;width:30px;padding:0"></div><div class="c" style="left:30px;width:30px;padding:0"></div><div class="c" style="left:60px;width:30px;padding:0"></div><div class="c" style="left:90px;width:30px;padding:0"></div><svg class="ic" style="left:40px;top:6px" width="15" height="14" viewBox="0 0 15 14"><rect x="0" y="0" width="11.800" height="1.500" fill="#c6c6ea"/><rect x="0" y="1.500" width="11.800" height="9.700" fill="#e8f0fc"/><rect x="3.600" y="3.500" width="5.400" height="1.600" fill="#c6d8f5"/><rect x="3.600" y="7.300" width="5.400" height="1.600" fill="#c6d8f5"/><rect x="2" y="3.500" width=".8" height="1.600" fill="#d5e2f8"/><rect x="2" y="7.300" width=".8" height="1.600" fill="#d5e2f8"/><path d="M6.100 13l.8-2.200 5.200-4.900 1.400 1.400-5.200 4.900z" fill="#fcdfae"/><path d="M12.100 5.900l.9-.9 1.400 1.400-.9.900z" fill="#f8caca"/></svg><svg class="ic" style="left:69px;top:7px" width="16" height="11" viewBox="0 0 16 11"><path d="M.8 5.300C4 .2 12 .2 15.200 5.300" fill="none" stroke="#d5dadd" stroke-width="1.100"/><path d="M.8 5.300C4 10.500 12 10.500 15.200 5.300" fill="none" stroke="#eceff1" stroke-width=".8"/><circle cx="8" cy="5.400" r="3" fill="#b8e4ea"/><circle cx="8" cy="5.400" r="1.100" fill="#a9cdd3"/></svg><div class="c" style="left:120px;width:536px"></div><div class="c" style="left:656px;width:120px"></div><div class="c r" style="left:776px;width:80px"></div><div class="c r" style="left:856px;width:100px"><span>R$ 66,66</span></div><div class="c" style="left:956px;width:100px"></div><div class="c" style="left:1056px;width:50px"><span>Não</span></div><div class="c" style="left:1106px;width:100px"><span>04/09/2024</span></div><div class="c" style="left:1206px;width:100px"><span>03/12/2024</span></div><div class="c" style="left:1306px;width:150px"><span>MATRIZ</span></div><div class="c" style="left:1456px;width:200px"><span>VENDA DIARIA</span></div><div class="c" style="left:1656px;width:130px"><span>Aberto</span></div><div class="c" style="left:1786px;width:50px"><span>N</span></div></div>
<div class="row dk u" style="top:149px"><div class="c" style="left:0px;width:30px;padding:0"></div><div class="c" style="left:30px;width:30px;padding:0"></div><div class="c" style="left:60px;width:30px;padding:0"></div><div class="c" style="left:90px;width:30px;padding:0"></div><svg class="ic" style="left:40px;top:6px" width="15" height="14" viewBox="0 0 15 14"><rect x="0" y="0" width="11.800" height="1.500" fill="#c6c6ea"/><rect x="0" y="1.500" width="11.800" height="9.700" fill="#e8f0fc"/><rect x="3.600" y="3.500" width="5.400" height="1.600" fill="#c6d8f5"/><rect x="3.600" y="7.300" width="5.400" height="1.600" fill="#c6d8f5"/><rect x="2" y="3.500" width=".8" height="1.600" fill="#d5e2f8"/><rect x="2" y="7.300" width=".8" height="1.600" fill="#d5e2f8"/><path d="M6.100 13l.8-2.200 5.200-4.900 1.400 1.400-5.200 4.900z" fill="#fcdfae"/><path d="M12.100 5.900l.9-.9 1.400 1.400-.9.900z" fill="#f8caca"/></svg><svg class="ic" style="left:69px;top:7px" width="16" height="11" viewBox="0 0 16 11"><path d="M.8 5.300C4 .2 12 .2 15.200 5.300" fill="none" stroke="#d5dadd" stroke-width="1.100"/><path d="M.8 5.300C4 10.500 12 10.500 15.200 5.300" fill="none" stroke="#eceff1" stroke-width=".8"/><circle cx="8" cy="5.400" r="3" fill="#b8e4ea"/><circle cx="8" cy="5.400" r="1.100" fill="#a9cdd3"/></svg><div class="c" style="left:120px;width:536px"></div><div class="c" style="left:656px;width:120px"></div><div class="c r" style="left:776px;width:80px"></div><div class="c r" style="left:856px;width:100px"><span>R$ 66,67</span></div><div class="c" style="left:956px;width:100px"><span>&nbsp;</span></div><div class="c" style="left:1056px;width:50px"><span>Não</span></div><div class="c" style="left:1106px;width:100px"><span>04/09/2024</span></div><div class="c" style="left:1206px;width:100px"><span>03/11/2024</span></div><div class="c" style="left:1306px;width:150px"><span>MATRIZ</span></div><div class="c" style="left:1456px;width:200px"><span>VENDA DIARIA</span></div><div class="c" style="left:1656px;width:130px"><span>Vencido</span></div><div class="c" style="left:1786px;width:50px"><span>N</span></div></div>
<span class="abs dk" style="left:6px;top:151px;line-height:24px;text-decoration:underline">&nbsp;</span>
<div class="row lt u alt" style="top:174px"><div class="c" style="left:0px;width:30px;padding:0"></div><div class="c" style="left:30px;width:30px;padding:0"></div><div class="c" style="left:60px;width:30px;padding:0"></div><div class="c" style="left:90px;width:30px;padding:0"></div><svg class="ic" style="left:40px;top:6px" width="15" height="14" viewBox="0 0 15 14"><rect x="0" y="0" width="11.800" height="1.500" fill="#c6c6ea"/><rect x="0" y="1.500" width="11.800" height="9.700" fill="#e8f0fc"/><rect x="3.600" y="3.500" width="5.400" height="1.600" fill="#c6d8f5"/><rect x="3.600" y="7.300" width="5.400" height="1.600" fill="#c6d8f5"/><rect x="2" y="3.500" width=".8" height="1.600" fill="#d5e2f8"/><rect x="2" y="7.300" width=".8" height="1.600" fill="#d5e2f8"/><path d="M6.100 13l.8-2.200 5.200-4.900 1.400 1.400-5.200 4.900z" fill="#fcdfae"/><path d="M12.100 5.900l.9-.9 1.400 1.400-.9.900z" fill="#f8caca"/></svg><svg class="ic" style="left:69px;top:7px" width="16" height="11" viewBox="0 0 16 11"><path d="M.8 5.300C4 .2 12 .2 15.200 5.300" fill="none" stroke="#d5dadd" stroke-width="1.100"/><path d="M.8 5.300C4 10.500 12 10.500 15.200 5.300" fill="none" stroke="#eceff1" stroke-width=".8"/><circle cx="8" cy="5.400" r="3" fill="#b8e4ea"/><circle cx="8" cy="5.400" r="1.100" fill="#a9cdd3"/></svg><div class="c" style="left:120px;width:536px"></div><div class="c" style="left:656px;width:120px"></div><div class="c r" style="left:776px;width:80px"></div><div class="c r" style="left:856px;width:100px"><span>R$ 66,67</span></div><div class="c" style="left:956px;width:100px"><span>&nbsp;</span></div><div class="c" style="left:1056px;width:50px"><span>Não</span></div><div class="c" style="left:1106px;width:100px"><span>04/09/2024</span></div><div class="c" style="left:1206px;width:100px"><span>04/10/2024</span></div><div class="c" style="left:1306px;width:150px"><span>MATRIZ</span></div><div class="c" style="left:1456px;width:200px"><span>VENDA DIARIA</span></div><div class="c" style="left:1656px;width:130px"><span>Vencido</span></div><div class="c" style="left:1786px;width:50px"><span>N</span></div></div>
<span class="abs lt" style="left:6px;top:176px;line-height:24px;text-decoration:underline">&nbsp;</span>
<div class="row dk u" style="top:199px"><div class="c" style="left:0px;width:30px;padding:0"></div><div class="c" style="left:30px;width:30px;padding:0"></div><div class="c" style="left:60px;width:30px;padding:0"></div><div class="c" style="left:90px;width:30px;padding:0"></div><svg class="ic" style="left:40px;top:6px" width="15" height="14" viewBox="0 0 15 14"><rect x="0" y="0" width="11.800" height="1.500" fill="#c6c6ea"/><rect x="0" y="1.500" width="11.800" height="9.700" fill="#e8f0fc"/><rect x="3.600" y="3.500" width="5.400" height="1.600" fill="#c6d8f5"/><rect x="3.600" y="7.300" width="5.400" height="1.600" fill="#c6d8f5"/><rect x="2" y="3.500" width=".8" height="1.600" fill="#d5e2f8"/><rect x="2" y="7.300" width=".8" height="1.600" fill="#d5e2f8"/><path d="M6.100 13l.8-2.200 5.200-4.900 1.400 1.400-5.200 4.900z" fill="#fcdfae"/><path d="M12.100 5.900l.9-.9 1.400 1.400-.9.900z" fill="#f8caca"/></svg><svg class="ic" style="left:69px;top:7px" width="16" height="11" viewBox="0 0 16 11"><path d="M.8 5.300C4 .2 12 .2 15.200 5.300" fill="none" stroke="#d5dadd" stroke-width="1.100"/><path d="M.8 5.300C4 10.500 12 10.500 15.200 5.300" fill="none" stroke="#eceff1" stroke-width=".8"/><circle cx="8" cy="5.400" r="3" fill="#b8e4ea"/><circle cx="8" cy="5.400" r="1.100" fill="#a9cdd3"/></svg><div class="c" style="left:120px;width:536px"></div><div class="c" style="left:656px;width:120px"></div><div class="c r" style="left:776px;width:80px"></div><div class="c r" style="left:856px;width:100px"><span>R$ 2.000,00</span></div><div class="c" style="left:956px;width:100px"><span>&nbsp;</span></div><div class="c" style="left:1056px;width:50px"><span>Não</span></div><div class="c" style="left:1106px;width:100px"><span>03/09/2024</span></div><div class="c" style="left:1206px;width:100px"><span>03/09/2024</span></div><div class="c" style="left:1306px;width:150px"><span>MATRIZ</span></div><div class="c" style="left:1456px;width:200px"><span>VENDA DIARIA</span></div><div class="c" style="left:1656px;width:130px"><span>Vencido</span></div><div class="c" style="left:1786px;width:50px"><span>N</span></div></div>
<span class="abs dk" style="left:6px;top:201px;line-height:24px;text-decoration:underline">&nbsp;</span>
<div class="row lt alt" style="top:224px"><div class="c" style="left:0px;width:30px;padding:0"></div><div class="c" style="left:30px;width:30px;padding:0"></div><div class="c" style="left:60px;width:30px;padding:0"></div><div class="c" style="left:90px;width:30px;padding:0"></div><svg class="ic" style="left:40px;top:6px" width="15" height="14" viewBox="0 0 15 14"><rect x="0" y="0" width="11.800" height="1.500" fill="#c6c6ea"/><rect x="0" y="1.500" width="11.800" height="9.700" fill="#e8f0fc"/><rect x="3.600" y="3.500" width="5.400" height="1.600" fill="#c6d8f5"/><rect x="3.600" y="7.300" width="5.400" height="1.600" fill="#c6d8f5"/><rect x="2" y="3.500" width=".8" height="1.600" fill="#d5e2f8"/><rect x="2" y="7.300" width=".8" height="1.600" fill="#d5e2f8"/><path d="M6.100 13l.8-2.200 5.200-4.900 1.400 1.400-5.200 4.900z" fill="#fcdfae"/><path d="M12.100 5.900l.9-.9 1.400 1.400-.9.900z" fill="#f8caca"/></svg><svg class="ic" style="left:69px;top:7px" width="16" height="11" viewBox="0 0 16 11"><path d="M.8 5.300C4 .2 12 .2 15.200 5.300" fill="none" stroke="#d5dadd" stroke-width="1.100"/><path d="M.8 5.300C4 10.500 12 10.500 15.200 5.300" fill="none" stroke="#eceff1" stroke-width=".8"/><circle cx="8" cy="5.400" r="3" fill="#b8e4ea"/><circle cx="8" cy="5.400" r="1.100" fill="#a9cdd3"/></svg><div class="c" style="left:120px;width:536px"></div><div class="c" style="left:656px;width:120px"></div><div class="c r" style="left:776px;width:80px"></div><div class="c r" style="left:856px;width:100px"><span>R$ 66,66</span></div><div class="c" style="left:956px;width:100px"></div><div class="c" style="left:1056px;width:50px"><span>Não</span></div><div class="c" style="left:1106px;width:100px"><span>29/08/2024</span></div><div class="c" style="left:1206px;width:100px"><span>27/11/2024</span></div><div class="c" style="left:1306px;width:150px"><span>MATRIZ</span></div><div class="c" style="left:1456px;width:200px"><span>VENDA DIARIA</span></div><div class="c" style="left:1656px;width:130px"><span>Aberto</span></div><div class="c" style="left:1786px;width:50px"><span>N</span></div></div>
<div class="row dk u" style="top:249px"><div class="c" style="left:0px;width:30px;padding:0"></div><div class="c" style="left:30px;width:30px;padding:0"></div><div class="c" style="left:60px;width:30px;padding:0"></div><div class="c" style="left:90px;width:30px;padding:0"></div><svg class="ic" style="left:40px;top:6px" width="15" height="14" viewBox="0 0 15 14"><rect x="0" y="0" width="11.800" height="1.500" fill="#c6c6ea"/><rect x="0" y="1.500" width="11.800" height="9.700" fill="#e8f0fc"/><rect x="3.600" y="3.500" width="5.400" height="1.600" fill="#c6d8f5"/><rect x="3.600" y="7.300" width="5.400" height="1.600" fill="#c6d8f5"/><rect x="2" y="3.500" width=".8" height="1.600" fill="#d5e2f8"/><rect x="2" y="7.300" width=".8" height="1.600" fill="#d5e2f8"/><path d="M6.100 13l.8-2.200 5.200-4.900 1.400 1.400-5.200 4.900z" fill="#fcdfae"/><path d="M12.100 5.900l.9-.9 1.400 1.400-.9.900z" fill="#f8caca"/></svg><svg class="ic" style="left:69px;top:7px" width="16" height="11" viewBox="0 0 16 11"><path d="M.8 5.300C4 .2 12 .2 15.200 5.300" fill="none" stroke="#d5dadd" stroke-width="1.100"/><path d="M.8 5.300C4 10.500 12 10.500 15.200 5.300" fill="none" stroke="#eceff1" stroke-width=".8"/><circle cx="8" cy="5.400" r="3" fill="#b8e4ea"/><circle cx="8" cy="5.400" r="1.100" fill="#a9cdd3"/></svg><div class="c" style="left:120px;width:536px"></div><div class="c" style="left:656px;width:120px"></div><div class="c r" style="left:776px;width:80px"></div><div class="c r" style="left:856px;width:100px"><span>R$ 66,67</span></div><div class="c" style="left:956px;width:100px"><span>&nbsp;</span></div><div class="c" style="left:1056px;width:50px"><span>Não</span></div><div class="c" style="left:1106px;width:100px"><span>29/08/2024</span></div><div class="c" style="left:1206px;width:100px"><span>28/10/2024</span></div><div class="c" style="left:1306px;width:150px"><span>MATRIZ</span></div><div class="c" style="left:1456px;width:200px"><span>VENDA DIARIA</span></div><div class="c" style="left:1656px;width:130px"><span>Vencido</span></div><div class="c" style="left:1786px;width:50px"><span>N</span></div></div>
<span class="abs dk" style="left:6px;top:251px;line-height:24px;text-decoration:underline">&nbsp;</span>
<div class="row lt u alt" style="top:274px"><div class="c" style="left:0px;width:30px;padding:0"></div><div class="c" style="left:30px;width:30px;padding:0"></div><div class="c" style="left:60px;width:30px;padding:0"></div><div class="c" style="left:90px;width:30px;padding:0"></div><svg class="ic" style="left:40px;top:6px" width="15" height="14" viewBox="0 0 15 14"><rect x="0" y="0" width="11.800" height="1.500" fill="#c6c6ea"/><rect x="0" y="1.500" width="11.800" height="9.700" fill="#e8f0fc"/><rect x="3.600" y="3.500" width="5.400" height="1.600" fill="#c6d8f5"/><rect x="3.600" y="7.300" width="5.400" height="1.600" fill="#c6d8f5"/><rect x="2" y="3.500" width=".8" height="1.600" fill="#d5e2f8"/><rect x="2" y="7.300" width=".8" height="1.600" fill="#d5e2f8"/><path d="M6.100 13l.8-2.200 5.200-4.900 1.400 1.400-5.200 4.900z" fill="#fcdfae"/><path d="M12.100 5.900l.9-.9 1.400 1.400-.9.900z" fill="#f8caca"/></svg><svg class="ic" style="left:69px;top:7px" width="16" height="11" viewBox="0 0 16 11"><path d="M.8 5.300C4 .2 12 .2 15.200 5.300" fill="none" stroke="#d5dadd" stroke-width="1.100"/><path d="M.8 5.300C4 10.500 12 10.500 15.200 5.300" fill="none" stroke="#eceff1" stroke-width=".8"/><circle cx="8" cy="5.400" r="3" fill="#b8e4ea"/><circle cx="8" cy="5.400" r="1.100" fill="#a9cdd3"/></svg><div class="c" style="left:120px;width:536px"></div><div class="c" style="left:656px;width:120px"></div><div class="c r" style="left:776px;width:80px"></div><div class="c r" style="left:856px;width:100px"><span>R$ 66,67</span></div><div class="c" style="left:956px;width:100px"><span>&nbsp;</span></div><div class="c" style="left:1056px;width:50px"><span>Não</span></div><div class="c" style="left:1106px;width:100px"><span>29/08/2024</span></div><div class="c" style="left:1206px;width:100px"><span>28/09/2024</span></div><div class="c" style="left:1306px;width:150px"><span>MATRIZ</span></div><div class="c" style="left:1456px;width:200px"><span>VENDA DIARIA</span></div><div class="c" style="left:1656px;width:130px"><span>Vencido</span></div><div class="c" style="left:1786px;width:50px"><span>N</span></div></div>
<span class="abs lt" style="left:6px;top:276px;line-height:24px;text-decoration:underline">&nbsp;</span>
<div class="row dk u" style="top:299px"><div class="c" style="left:0px;width:30px;padding:0"></div><div class="c" style="left:30px;width:30px;padding:0"></div><div class="c" style="left:60px;width:30px;padding:0"></div><div class="c" style="left:90px;width:30px;padding:0"></div><svg class="ic" style="left:40px;top:6px" width="15" height="14" viewBox="0 0 15 14"><rect x="0" y="0" width="11.800" height="1.500" fill="#c6c6ea"/><rect x="0" y="1.500" width="11.800" height="9.700" fill="#e8f0fc"/><rect x="3.600" y="3.500" width="5.400" height="1.600" fill="#c6d8f5"/><rect x="3.600" y="7.300" width="5.400" height="1.600" fill="#c6d8f5"/><rect x="2" y="3.500" width=".8" height="1.600" fill="#d5e2f8"/><rect x="2" y="7.300" width=".8" height="1.600" fill="#d5e2f8"/><path d="M6.100 13l.8-2.200 5.200-4.900 1.400 1.400-5.200 4.900z" fill="#fcdfae"/><path d="M12.100 5.900l.9-.9 1.400 1.400-.9.900z" fill="#f8caca"/></svg><svg class="ic" style="left:69px;top:7px" width="16" height="11" viewBox="0 0 16 11"><path d="M.8 5.300C4 .2 12 .2 15.200 5.300" fill="none" stroke="#d5dadd" stroke-width="1.100"/><path d="M.8 5.300C4 10.500 12 10.500 15.200 5.300" fill="none" stroke="#eceff1" stroke-width=".8"/><circle cx="8" cy="5.400" r="3" fill="#b8e4ea"/><circle cx="8" cy="5.400" r="1.100" fill="#a9cdd3"/></svg><div class="c" style="left:120px;width:536px"></div><div class="c" style="left:656px;width:120px"></div><div class="c r" style="left:776px;width:80px"></div><div class="c r" style="left:856px;width:100px"><span>R$ 300,00</span></div><div class="c" style="left:956px;width:100px"><span>&nbsp;</span></div><div class="c" style="left:1056px;width:50px"><span>Não</span></div><div class="c" style="left:1106px;width:100px"><span>28/08/2024</span></div><div class="c" style="left:1206px;width:100px"><span>28/08/2024</span></div><div class="c" style="left:1306px;width:150px"><span>MATRIZ</span></div><div class="c" style="left:1456px;width:200px"><span>VENDA DIARIA</span></div><div class="c" style="left:1656px;width:130px"><span>Vencido</span></div><div class="c" style="left:1786px;width:50px"><span>N</span></div></div>
<span class="abs dk" style="left:6px;top:301px;line-height:24px;text-decoration:underline">&nbsp;</span>
<div class="row lt u alt" style="top:324px"><div class="c" style="left:0px;width:30px;padding:0"></div><div class="c" style="left:30px;width:30px;padding:0"></div><div class="c" style="left:60px;width:30px;padding:0"></div><div class="c" style="left:90px;width:30px;padding:0"></div><svg class="ic" style="left:40px;top:6px" width="15" height="14" viewBox="0 0 15 14"><rect x="0" y="0" width="11.800" height="1.500" fill="#c6c6ea"/><rect x="0" y="1.500" width="11.800" height="9.700" fill="#e8f0fc"/><rect x="3.600" y="3.500" width="5.400" height="1.600" fill="#c6d8f5"/><rect x="3.600" y="7.300" width="5.400" height="1.600" fill="#c6d8f5"/><rect x="2" y="3.500" width=".8" height="1.600" fill="#d5e2f8"/><rect x="2" y="7.300" width=".8" height="1.600" fill="#d5e2f8"/><path d="M6.100 13l.8-2.200 5.200-4.900 1.400 1.400-5.200 4.900z" fill="#fcdfae"/><path d="M12.100 5.900l.9-.9 1.400 1.400-.9.900z" fill="#f8caca"/></svg><svg class="ic" style="left:69px;top:7px" width="16" height="11" viewBox="0 0 16 11"><path d="M.8 5.300C4 .2 12 .2 15.200 5.300" fill="none" stroke="#d5dadd" stroke-width="1.100"/><path d="M.8 5.300C4 10.500 12 10.500 15.200 5.300" fill="none" stroke="#eceff1" stroke-width=".8"/><circle cx="8" cy="5.400" r="3" fill="#b8e4ea"/><circle cx="8" cy="5.400" r="1.100" fill="#a9cdd3"/></svg><div class="c" style="left:120px;width:536px"></div><div class="c" style="left:656px;width:120px"></div><div class="c r" style="left:776px;width:80px"></div><div class="c r" style="left:856px;width:100px"><span>R$ 200,00</span></div><div class="c" style="left:956px;width:100px"><span>&nbsp;</span></div><div class="c" style="left:1056px;width:50px"><span>Não</span></div><div class="c" style="left:1106px;width:100px"><span>26/08/2024</span></div><div class="c" style="left:1206px;width:100px"><span>26/08/2024</span></div><div class="c" style="left:1306px;width:150px"><span>MATRIZ</span></div><div class="c" style="left:1456px;width:200px"><span>VENDA DIARIA</span></div><div class="c" style="left:1656px;width:130px"><span>Vencido</span></div><div class="c" style="left:1786px;width:50px"><span>N</span></div></div>
<span class="abs lt" style="left:6px;top:326px;line-height:24px;text-decoration:underline">&nbsp;</span>
<div class="row dk u" style="top:349px"><div class="c" style="left:0px;width:30px;padding:0"></div><div class="c" style="left:30px;width:30px;padding:0"></div><div class="c" style="left:60px;width:30px;padding:0"></div><div class="c" style="left:90px;width:30px;padding:0"></div><svg class="ic" style="left:40px;top:6px" width="15" height="14" viewBox="0 0 15 14"><rect x="0" y="0" width="11.800" height="1.500" fill="#c6c6ea"/><rect x="0" y="1.500" width="11.800" height="9.700" fill="#e8f0fc"/><rect x="3.600" y="3.500" width="5.400" height="1.600" fill="#c6d8f5"/><rect x="3.600" y="7.300" width="5.400" height="1.600" fill="#c6d8f5"/><rect x="2" y="3.500" width=".8" height="1.600" fill="#d5e2f8"/><rect x="2" y="7.300" width=".8" height="1.600" fill="#d5e2f8"/><path d="M6.100 13l.8-2.200 5.200-4.900 1.400 1.400-5.200 4.900z" fill="#fcdfae"/><path d="M12.100 5.900l.9-.9 1.400 1.400-.9.900z" fill="#f8caca"/></svg><svg class="ic" style="left:69px;top:7px" width="16" height="11" viewBox="0 0 16 11"><path d="M.8 5.300C4 .2 12 .2 15.200 5.300" fill="none" stroke="#d5dadd" stroke-width="1.100"/><path d="M.8 5.300C4 10.500 12 10.500 15.200 5.300" fill="none" stroke="#eceff1" stroke-width=".8"/><circle cx="8" cy="5.400" r="3" fill="#b8e4ea"/><circle cx="8" cy="5.400" r="1.100" fill="#a9cdd3"/></svg><div class="c" style="left:120px;width:536px"></div><div class="c" style="left:656px;width:120px"></div><div class="c r" style="left:776px;width:80px"></div><div class="c r" style="left:856px;width:100px"><span>R$ 439,99</span></div><div class="c" style="left:956px;width:100px"><span>&nbsp;</span></div><div class="c" style="left:1056px;width:50px"><span>Não</span></div><div class="c" style="left:1106px;width:100px"><span>26/08/2024</span></div><div class="c" style="left:1206px;width:100px"><span>26/08/2024</span></div><div class="c" style="left:1306px;width:150px"><span>MATRIZ</span></div><div class="c" style="left:1456px;width:200px"><span>VENDA DIARIA</span></div><div class="c" style="left:1656px;width:130px"><span>Vencido</span></div><div class="c" style="left:1786px;width:50px"><span>N</span></div></div>
<span class="abs dk" style="left:6px;top:351px;line-height:24px;text-decoration:underline">&nbsp;</span>
<div class="row lt u alt" style="top:374px"><div class="c" style="left:0px;width:30px;padding:0"></div><div class="c" style="left:30px;width:30px;padding:0"></div><div class="c" style="left:60px;width:30px;padding:0"></div><div class="c" style="left:90px;width:30px;padding:0"></div><svg class="ic" style="left:40px;top:6px" width="15" height="14" viewBox="0 0 15 14"><rect x="0" y="0" width="11.800" height="1.500" fill="#c6c6ea"/><rect x="0" y="1.500" width="11.800" height="9.700" fill="#e8f0fc"/><rect x="3.600" y="3.500" width="5.400" height="1.600" fill="#c6d8f5"/><rect x="3.600" y="7.300" width="5.400" height="1.600" fill="#c6d8f5"/><rect x="2" y="3.500" width=".8" height="1.600" fill="#d5e2f8"/><rect x="2" y="7.300" width=".8" height="1.600" fill="#d5e2f8"/><path d="M6.100 13l.8-2.200 5.200-4.900 1.400 1.400-5.200 4.900z" fill="#fcdfae"/><path d="M12.100 5.900l.9-.9 1.400 1.400-.9.900z" fill="#f8caca"/></svg><svg class="ic" style="left:69px;top:7px" width="16" height="11" viewBox="0 0 16 11"><path d="M.8 5.300C4 .2 12 .2 15.200 5.300" fill="none" stroke="#d5dadd" stroke-width="1.100"/><path d="M.8 5.300C4 10.500 12 10.500 15.200 5.300" fill="none" stroke="#eceff1" stroke-width=".8"/><circle cx="8" cy="5.400" r="3" fill="#b8e4ea"/><circle cx="8" cy="5.400" r="1.100" fill="#a9cdd3"/></svg><div class="c" style="left:120px;width:536px"><span>Cliente Padrão</span></div><div class="c" style="left:656px;width:120px"><span>PIX</span></div><div class="c r" style="left:776px;width:80px"><span>R$ 39,98</span></div><div class="c r" style="left:856px;width:100px"><span>R$ 39,98</span></div><div class="c" style="left:956px;width:100px"><span>&nbsp;</span></div><div class="c" style="left:1056px;width:50px"><span>Não</span></div><div class="c" style="left:1106px;width:100px"><span>26/08/2024</span></div><div class="c" style="left:1206px;width:100px"><span>26/08/2024</span></div><div class="c" style="left:1306px;width:150px"><span>MATRIZ</span></div><div class="c" style="left:1456px;width:200px"><span>VENDA DIARIA</span></div><div class="c" style="left:1656px;width:130px"><span>Vencido</span></div><div class="c" style="left:1786px;width:50px"><span>N</span></div></div>
<span class="abs lt" style="left:6px;top:376px;line-height:24px;text-decoration:underline">&nbsp;</span>
<div class="row dk u" style="top:399px"><div class="c" style="left:0px;width:30px;padding:0"></div><div class="c" style="left:30px;width:30px;padding:0"></div><div class="c" style="left:60px;width:30px;padding:0"></div><div class="c" style="left:90px;width:30px;padding:0"></div><svg class="ic" style="left:40px;top:6px" width="15" height="14" viewBox="0 0 15 14"><rect x="0" y="0" width="11.800" height="1.500" fill="#c6c6ea"/><rect x="0" y="1.500" width="11.800" height="9.700" fill="#e8f0fc"/><rect x="3.600" y="3.500" width="5.400" height="1.600" fill="#c6d8f5"/><rect x="3.600" y="7.300" width="5.400" height="1.600" fill="#c6d8f5"/><rect x="2" y="3.500" width=".8" height="1.600" fill="#d5e2f8"/><rect x="2" y="7.300" width=".8" height="1.600" fill="#d5e2f8"/><path d="M6.100 13l.8-2.200 5.200-4.900 1.400 1.400-5.200 4.900z" fill="#fcdfae"/><path d="M12.100 5.900l.9-.9 1.400 1.400-.9.900z" fill="#f8caca"/></svg><svg class="ic" style="left:69px;top:7px" width="16" height="11" viewBox="0 0 16 11"><path d="M.8 5.300C4 .2 12 .2 15.200 5.300" fill="none" stroke="#d5dadd" stroke-width="1.100"/><path d="M.8 5.300C4 10.500 12 10.500 15.200 5.300" fill="none" stroke="#eceff1" stroke-width=".8"/><circle cx="8" cy="5.400" r="3" fill="#b8e4ea"/><circle cx="8" cy="5.400" r="1.100" fill="#a9cdd3"/></svg><div class="c" style="left:120px;width:536px"><span>Cliente Padrão</span></div><div class="c" style="left:656px;width:120px"><span>CARTAO - [CREDITO]</span></div><div class="c r" style="left:776px;width:80px"><span>R$ 200,00</span></div><div class="c r" style="left:856px;width:100px"><span>R$ 200,00</span></div><div class="c" style="left:956px;width:100px"><span>&nbsp;</span></div><div class="c" style="left:1056px;width:50px"><span>Não</span></div><div class="c" style="left:1106px;width:100px"><span>23/08/2024</span></div><div class="c" style="left:1206px;width:100px"><span>22/09/2024</span></div><div class="c" style="left:1306px;width:150px"><span>MATRIZ</span></div><div class="c" style="left:1456px;width:200px"><span>VENDA DIARIA</span></div><div class="c" style="left:1656px;width:130px"><span>Vencido</span></div><div class="c" style="left:1786px;width:50px"><span>N</span></div></div>
<span class="abs dk" style="left:6px;top:401px;line-height:24px;text-decoration:underline">&nbsp;</span>
<div class="row lt u alt" style="top:424px"><div class="c" style="left:0px;width:30px;padding:0"></div><div class="c" style="left:30px;width:30px;padding:0"></div><div class="c" style="left:60px;width:30px;padding:0"></div><div class="c" style="left:90px;width:30px;padding:0"></div><svg class="ic" style="left:40px;top:6px" width="15" height="14" viewBox="0 0 15 14"><rect x="0" y="0" width="11.800" height="1.500" fill="#c6c6ea"/><rect x="0" y="1.500" width="11.800" height="9.700" fill="#e8f0fc"/><rect x="3.600" y="3.500" width="5.400" height="1.600" fill="#c6d8f5"/><rect x="3.600" y="7.300" width="5.400" height="1.600" fill="#c6d8f5"/><rect x="2" y="3.500" width=".8" height="1.600" fill="#d5e2f8"/><rect x="2" y="7.300" width=".8" height="1.600" fill="#d5e2f8"/><path d="M6.100 13l.8-2.200 5.200-4.900 1.400 1.400-5.200 4.900z" fill="#fcdfae"/><path d="M12.100 5.900l.9-.9 1.400 1.400-.9.900z" fill="#f8caca"/></svg><svg class="ic" style="left:69px;top:7px" width="16" height="11" viewBox="0 0 16 11"><path d="M.8 5.300C4 .2 12 .2 15.200 5.300" fill="none" stroke="#d5dadd" stroke-width="1.100"/><path d="M.8 5.300C4 10.500 12 10.500 15.200 5.300" fill="none" stroke="#eceff1" stroke-width=".8"/><circle cx="8" cy="5.400" r="3" fill="#b8e4ea"/><circle cx="8" cy="5.400" r="1.100" fill="#a9cdd3"/></svg><div class="c" style="left:120px;width:536px"><span>Manuela Emilly de Paula</span></div><div class="c" style="left:656px;width:120px"><span>CARTAO - [CREDITO]</span></div><div class="c r" style="left:776px;width:80px"><span>R$ 1.800,00</span></div><div class="c r" style="left:856px;width:100px"><span>R$ 1.880,00</span></div><div class="c" style="left:956px;width:100px"><span>&nbsp;</span></div><div class="c" style="left:1056px;width:50px"><span>Não</span></div><div class="c" style="left:1106px;width:100px"><span>23/08/2024</span></div><div class="c" style="left:1206px;width:100px"><span>22/09/2024</span></div><div class="c" style="left:1306px;width:150px"><span>MATRIZ</span></div><div class="c" style="left:1456px;width:200px"><span>VENDA DIARIA</span></div><div class="c" style="left:1656px;width:130px"><span>Vencido</span></div><div class="c" style="left:1786px;width:50px"><span>N</span></div></div>
<span class="abs lt" style="left:6px;top:426px;line-height:24px;text-decoration:underline">&nbsp;</span>
<div class="row dk u" style="top:449px"><div class="c" style="left:0px;width:30px;padding:0"></div><div class="c" style="left:30px;width:30px;padding:0"></div><div class="c" style="left:60px;width:30px;padding:0"></div><div class="c" style="left:90px;width:30px;padding:0"></div><svg class="ic" style="left:40px;top:6px" width="15" height="14" viewBox="0 0 15 14"><rect x="0" y="0" width="11.800" height="1.500" fill="#c6c6ea"/><rect x="0" y="1.500" width="11.800" height="9.700" fill="#e8f0fc"/><rect x="3.600" y="3.500" width="5.400" height="1.600" fill="#c6d8f5"/><rect x="3.600" y="7.300" width="5.400" height="1.600" fill="#c6d8f5"/><rect x="2" y="3.500" width=".8" height="1.600" fill="#d5e2f8"/><rect x="2" y="7.300" width=".8" height="1.600" fill="#d5e2f8"/><path d="M6.100 13l.8-2.200 5.200-4.900 1.400 1.400-5.200 4.900z" fill="#fcdfae"/><path d="M12.100 5.900l.9-.9 1.400 1.400-.9.900z" fill="#f8caca"/></svg><svg class="ic" style="left:69px;top:7px" width="16" height="11" viewBox="0 0 16 11"><path d="M.8 5.300C4 .2 12 .2 15.200 5.300" fill="none" stroke="#d5dadd" stroke-width="1.100"/><path d="M.8 5.300C4 10.500 12 10.500 15.200 5.300" fill="none" stroke="#eceff1" stroke-width=".8"/><circle cx="8" cy="5.400" r="3" fill="#b8e4ea"/><circle cx="8" cy="5.400" r="1.100" fill="#a9cdd3"/></svg><div class="c" style="left:120px;width:536px"><span>Manuela Emilly de Paula</span></div><div class="c" style="left:656px;width:120px"><span>TROCA</span></div><div class="c r" style="left:776px;width:80px"><span>R$ 2.000,00</span></div><div class="c r" style="left:856px;width:100px"><span>R$ 2.020,00</span></div><div class="c" style="left:956px;width:100px"><span>&nbsp;</span></div><div class="c" style="left:1056px;width:50px"><span>Não</span></div><div class="c" style="left:1106px;width:100px"><span>23/08/2024</span></div><div class="c" style="left:1206px;width:100px"><span>23/08/2024</span></div><div class="c" style="left:1306px;width:150px"><span>MATRIZ</span></div><div class="c" style="left:1456px;width:200px"><span>VENDA DIARIA</span></div><div class="c" style="left:1656px;width:130px"><span>Vencido</span></div><div class="c" style="left:1786px;width:50px"><span>N</span></div></div>
<span class="abs dk" style="left:6px;top:451px;line-height:24px;text-decoration:underline">&nbsp;</span>
<div class="row lt u alt" style="top:474px"><div class="c" style="left:0px;width:30px;padding:0"></div><div class="c" style="left:30px;width:30px;padding:0"></div><div class="c" style="left:60px;width:30px;padding:0"></div><div class="c" style="left:90px;width:30px;padding:0"></div><svg class="ic" style="left:40px;top:6px" width="15" height="14" viewBox="0 0 15 14"><rect x="0" y="0" width="11.800" height="1.500" fill="#c6c6ea"/><rect x="0" y="1.500" width="11.800" height="9.700" fill="#e8f0fc"/><rect x="3.600" y="3.500" width="5.400" height="1.600" fill="#c6d8f5"/><rect x="3.600" y="7.300" width="5.400" height="1.600" fill="#c6d8f5"/><rect x="2" y="3.500" width=".8" height="1.600" fill="#d5e2f8"/><rect x="2" y="7.300" width=".8" height="1.600" fill="#d5e2f8"/><path d="M6.100 13l.8-2.200 5.200-4.900 1.400 1.400-5.200 4.900z" fill="#fcdfae"/><path d="M12.100 5.900l.9-.9 1.400 1.400-.9.900z" fill="#f8caca"/></svg><svg class="ic" style="left:69px;top:7px" width="16" height="11" viewBox="0 0 16 11"><path d="M.8 5.300C4 .2 12 .2 15.200 5.300" fill="none" stroke="#d5dadd" stroke-width="1.100"/><path d="M.8 5.300C4 10.500 12 10.500 15.200 5.300" fill="none" stroke="#eceff1" stroke-width=".8"/><circle cx="8" cy="5.400" r="3" fill="#b8e4ea"/><circle cx="8" cy="5.400" r="1.100" fill="#a9cdd3"/></svg><div class="c" style="left:120px;width:536px"><span>Arthur Diego Hugo da Mota</span></div><div class="c" style="left:656px;width:120px"><span>TROCA</span></div><div class="c r" style="left:776px;width:80px"><span>R$ 420,00</span></div><div class="c r" style="left:856px;width:100px"><span>R$ 410,48</span></div><div class="c" style="left:956px;width:100px"><span>&nbsp;</span></div><div class="c" style="left:1056px;width:50px"><span>Não</span></div><div class="c" style="left:1106px;width:100px"><span>23/08/2024</span></div><div class="c" style="left:1206px;width:100px"><span>23/08/2024</span></div><div class="c" style="left:1306px;width:150px"><span>MATRIZ</span></div><div class="c" style="left:1456px;width:200px"><span>VENDA DIARIA</span></div><div class="c" style="left:1656px;width:130px"><span>Vencido</span></div><div class="c" style="left:1786px;width:50px"><span>N</span></div></div>
<span class="abs lt" style="left:6px;top:476px;line-height:24px;text-decoration:underline">&nbsp;</span>
<div class="row dk u" style="top:499px"><div class="c" style="left:0px;width:30px;padding:0"></div><div class="c" style="left:30px;width:30px;padding:0"></div><div class="c" style="left:60px;width:30px;padding:0"></div><div class="c" style="left:90px;width:30px;padding:0"></div><svg class="ic" style="left:40px;top:6px" width="15" height="14" viewBox="0 0 15 14"><rect x="0" y="0" width="11.800" height="1.500" fill="#c6c6ea"/><rect x="0" y="1.500" width="11.800" height="9.700" fill="#e8f0fc"/><rect x="3.600" y="3.500" width="5.400" height="1.600" fill="#c6d8f5"/><rect x="3.600" y="7.300" width="5.400" height="1.600" fill="#c6d8f5"/><rect x="2" y="3.500" width=".8" height="1.600" fill="#d5e2f8"/><rect x="2" y="7.300" width=".8" height="1.600" fill="#d5e2f8"/><path d="M6.100 13l.8-2.200 5.200-4.900 1.400 1.400-5.200 4.900z" fill="#fcdfae"/><path d="M12.100 5.900l.9-.9 1.400 1.400-.9.900z" fill="#f8caca"/></svg><svg class="ic" style="left:69px;top:7px" width="16" height="11" viewBox="0 0 16 11"><path d="M.8 5.300C4 .2 12 .2 15.200 5.300" fill="none" stroke="#d5dadd" stroke-width="1.100"/><path d="M.8 5.300C4 10.500 12 10.500 15.200 5.300" fill="none" stroke="#eceff1" stroke-width=".8"/><circle cx="8" cy="5.400" r="3" fill="#b8e4ea"/><circle cx="8" cy="5.400" r="1.100" fill="#a9cdd3"/></svg><div class="c" style="left:120px;width:536px"><span>Cliente Padrão</span></div><div class="c" style="left:656px;width:120px"><span>CARTAO - [CREDITO]</span></div><div class="c r" style="left:776px;width:80px"><span>R$ 400,00</span></div><div class="c r" style="left:856px;width:100px"><span>R$ 400,00</span></div><div class="c" style="left:956px;width:100px"><span>&nbsp;</span></div><div class="c" style="left:1056px;width:50px"><span>Não</span></div><div class="c" style="left:1106px;width:100px"><span>23/08/2024</span></div><div class="c" style="left:1206px;width:100px"><span>22/09/2024</span></div><div class="c" style="left:1306px;width:150px"><span>MATRIZ</span></div><div class="c" style="left:1456px;width:200px"><span>VENDA DIARIA</span></div><div class="c" style="left:1656px;width:130px"><span>Vencido</span></div><div class="c" style="left:1786px;width:50px"><span>N</span></div></div>
<span class="abs dk" style="left:6px;top:501px;line-height:24px;text-decoration:underline">&nbsp;</span>
<div class="row lt u alt" style="top:524px"><div class="c" style="left:0px;width:30px;padding:0"></div><div class="c" style="left:30px;width:30px;padding:0"></div><div class="c" style="left:60px;width:30px;padding:0"></div><div class="c" style="left:90px;width:30px;padding:0"></div><svg class="ic" style="left:40px;top:6px" width="15" height="14" viewBox="0 0 15 14"><rect x="0" y="0" width="11.800" height="1.500" fill="#c6c6ea"/><rect x="0" y="1.500" width="11.800" height="9.700" fill="#e8f0fc"/><rect x="3.600" y="3.500" width="5.400" height="1.600" fill="#c6d8f5"/><rect x="3.600" y="7.300" width="5.400" height="1.600" fill="#c6d8f5"/><rect x="2" y="3.500" width=".8" height="1.600" fill="#d5e2f8"/><rect x="2" y="7.300" width=".8" height="1.600" fill="#d5e2f8"/><path d="M6.100 13l.8-2.200 5.200-4.900 1.400 1.400-5.200 4.900z" fill="#fcdfae"/><path d="M12.100 5.900l.9-.9 1.400 1.400-.9.900z" fill="#f8caca"/></svg><svg class="ic" style="left:69px;top:7px" width="16" height="11" viewBox="0 0 16 11"><path d="M.8 5.300C4 .2 12 .2 15.200 5.300" fill="none" stroke="#d5dadd" stroke-width="1.100"/><path d="M.8 5.300C4 10.500 12 10.500 15.200 5.300" fill="none" stroke="#eceff1" stroke-width=".8"/><circle cx="8" cy="5.400" r="3" fill="#b8e4ea"/><circle cx="8" cy="5.400" r="1.100" fill="#a9cdd3"/></svg><div class="c" style="left:120px;width:536px"><span>Cliente Padrão</span></div><div class="c" style="left:656px;width:120px"><span>CARTAO - [CREDITO]</span></div><div class="c r" style="left:776px;width:80px"><span>R$ 2.200,00</span></div><div class="c r" style="left:856px;width:100px"><span>R$ 2.200,00</span></div><div class="c" style="left:956px;width:100px"><span>&nbsp;</span></div><div class="c" style="left:1056px;width:50px"><span>Não</span></div><div class="c" style="left:1106px;width:100px"><span>23/08/2024</span></div><div class="c" style="left:1206px;width:100px"><span>22/09/2024</span></div><div class="c" style="left:1306px;width:150px"><span>MATRIZ</span></div><div class="c" style="left:1456px;width:200px"><span>VENDA DIARIA</span></div><div class="c" style="left:1656px;width:130px"><span>Vencido</span></div><div class="c" style="left:1786px;width:50px"><span>N</span></div></div>
<span class="abs lt" style="left:6px;top:526px;line-height:24px;text-decoration:underline">&nbsp;</span>
<div class="row dk u" style="top:549px"><div class="c" style="left:0px;width:30px;padding:0"></div><div class="c" style="left:30px;width:30px;padding:0"></div><div class="c" style="left:60px;width:30px;padding:0"></div><div class="c" style="left:90px;width:30px;padding:0"></div><svg class="ic" style="left:40px;top:6px" width="15" height="14" viewBox="0 0 15 14"><rect x="0" y="0" width="11.800" height="1.500" fill="#c6c6ea"/><rect x="0" y="1.500" width="11.800" height="9.700" fill="#e8f0fc"/><rect x="3.600" y="3.500" width="5.400" height="1.600" fill="#c6d8f5"/><rect x="3.600" y="7.300" width="5.400" height="1.600" fill="#c6d8f5"/><rect x="2" y="3.500" width=".8" height="1.600" fill="#d5e2f8"/><rect x="2" y="7.300" width=".8" height="1.600" fill="#d5e2f8"/><path d="M6.100 13l.8-2.200 5.200-4.900 1.400 1.400-5.200 4.900z" fill="#fcdfae"/><path d="M12.100 5.900l.9-.9 1.400 1.400-.9.900z" fill="#f8caca"/></svg><svg class="ic" style="left:69px;top:7px" width="16" height="11" viewBox="0 0 16 11"><path d="M.8 5.300C4 .2 12 .2 15.200 5.300" fill="none" stroke="#d5dadd" stroke-width="1.100"/><path d="M.8 5.300C4 10.500 12 10.500 15.200 5.300" fill="none" stroke="#eceff1" stroke-width=".8"/><circle cx="8" cy="5.400" r="3" fill="#b8e4ea"/><circle cx="8" cy="5.400" r="1.100" fill="#a9cdd3"/></svg><div class="c" style="left:120px;width:536px"><span>Cliente Padrão</span></div><div class="c" style="left:656px;width:120px"><span>CARTAO - [CREDITO]</span></div><div class="c r" style="left:776px;width:80px"><span>R$ 100,00</span></div><div class="c r" style="left:856px;width:100px"><span>R$ 100,00</span></div><div class="c" style="left:956px;width:100px"><span>&nbsp;</span></div><div class="c" style="left:1056px;width:50px"><span>Não</span></div><div class="c" style="left:1106px;width:100px"><span>22/08/2024</span></div><div class="c" style="left:1206px;width:100px"><span>21/10/2024</span></div><div class="c" style="left:1306px;width:150px"><span>MATRIZ</span></div><div class="c" style="left:1456px;width:200px"><span>VENDA DIARIA</span></div><div class="c" style="left:1656px;width:130px"><span>Vencido</span></div><div class="c" style="left:1786px;width:50px"><span>N</span></div></div>
<span class="abs dk" style="left:6px;top:551px;line-height:24px;text-decoration:underline">&nbsp;</span>
<div class="row lt u alt" style="top:574px"><div class="c" style="left:0px;width:30px;padding:0"></div><div class="c" style="left:30px;width:30px;padding:0"></div><div class="c" style="left:60px;width:30px;padding:0"></div><div class="c" style="left:90px;width:30px;padding:0"></div><svg class="ic" style="left:40px;top:6px" width="15" height="14" viewBox="0 0 15 14"><rect x="0" y="0" width="11.800" height="1.500" fill="#c6c6ea"/><rect x="0" y="1.500" width="11.800" height="9.700" fill="#e8f0fc"/><rect x="3.600" y="3.500" width="5.400" height="1.600" fill="#c6d8f5"/><rect x="3.600" y="7.300" width="5.400" height="1.600" fill="#c6d8f5"/><rect x="2" y="3.500" width=".8" height="1.600" fill="#d5e2f8"/><rect x="2" y="7.300" width=".8" height="1.600" fill="#d5e2f8"/><path d="M6.100 13l.8-2.200 5.200-4.900 1.400 1.400-5.200 4.900z" fill="#fcdfae"/><path d="M12.100 5.900l.9-.9 1.400 1.400-.9.900z" fill="#f8caca"/></svg><svg class="ic" style="left:69px;top:7px" width="16" height="11" viewBox="0 0 16 11"><path d="M.8 5.300C4 .2 12 .2 15.200 5.300" fill="none" stroke="#d5dadd" stroke-width="1.100"/><path d="M.8 5.300C4 10.500 12 10.500 15.200 5.300" fill="none" stroke="#eceff1" stroke-width=".8"/><circle cx="8" cy="5.400" r="3" fill="#b8e4ea"/><circle cx="8" cy="5.400" r="1.100" fill="#a9cdd3"/></svg><div class="c" style="left:120px;width:536px"><span>Cliente Padrão</span></div><div class="c" style="left:656px;width:120px"><span>CARTAO - [CREDITO]</span></div><div class="c r" style="left:776px;width:80px"><span>R$ 200,00</span></div><div class="c r" style="left:856px;width:100px"><span>R$ 200,00</span></div><div class="c" style="left:956px;width:100px"><span>&nbsp;</span></div><div class="c" style="left:1056px;width:50px"><span>Não</span></div><div class="c" style="left:1106px;width:100px"><span>22/08/2024</span></div><div class="c" style="left:1206px;width:100px"><span>21/09/2024</span></div><div class="c" style="left:1306px;width:150px"><span>MATRIZ</span></div><div class="c" style="left:1456px;width:200px"><span>VENDA DIARIA</span></div><div class="c" style="left:1656px;width:130px"><span>Vencido</span></div><div class="c" style="left:1786px;width:50px"><span>N</span></div></div>
<span class="abs lt" style="left:6px;top:576px;line-height:24px;text-decoration:underline">&nbsp;</span>
<div class="row dk u" style="top:599px"><div class="c" style="left:0px;width:30px;padding:0"></div><div class="c" style="left:30px;width:30px;padding:0"></div><div class="c" style="left:60px;width:30px;padding:0"></div><div class="c" style="left:90px;width:30px;padding:0"></div><svg class="ic" style="left:40px;top:6px" width="15" height="14" viewBox="0 0 15 14"><rect x="0" y="0" width="11.800" height="1.500" fill="#c6c6ea"/><rect x="0" y="1.500" width="11.800" height="9.700" fill="#e8f0fc"/><rect x="3.600" y="3.500" width="5.400" height="1.600" fill="#c6d8f5"/><rect x="3.600" y="7.300" width="5.400" height="1.600" fill="#c6d8f5"/><rect x="2" y="3.500" width=".8" height="1.600" fill="#d5e2f8"/><rect x="2" y="7.300" width=".8" height="1.600" fill="#d5e2f8"/><path d="M6.100 13l.8-2.200 5.200-4.900 1.400 1.400-5.200 4.900z" fill="#fcdfae"/><path d="M12.100 5.900l.9-.9 1.400 1.400-.9.900z" fill="#f8caca"/></svg><svg class="ic" style="left:69px;top:7px" width="16" height="11" viewBox="0 0 16 11"><path d="M.8 5.300C4 .2 12 .2 15.200 5.300" fill="none" stroke="#d5dadd" stroke-width="1.100"/><path d="M.8 5.300C4 10.500 12 10.500 15.200 5.300" fill="none" stroke="#eceff1" stroke-width=".8"/><circle cx="8" cy="5.400" r="3" fill="#b8e4ea"/><circle cx="8" cy="5.400" r="1.100" fill="#a9cdd3"/></svg><div class="c" style="left:120px;width:536px"><span>Arthur Diego Hugo da Mota</span></div><div class="c" style="left:656px;width:120px"><span>TROCA</span></div><div class="c r" style="left:776px;width:80px"><span>R$ 500,00</span></div><div class="c r" style="left:856px;width:100px"><span>R$ 500,00</span></div><div class="c" style="left:956px;width:100px"><span>&nbsp;</span></div><div class="c" style="left:1056px;width:50px"><span>Não</span></div><div class="c" style="left:1106px;width:100px"><span>22/08/2024</span></div><div class="c" style="left:1206px;width:100px"><span>22/08/2024</span></div><div class="c" style="left:1306px;width:150px"><span>MATRIZ</span></div><div class="c" style="left:1456px;width:200px"><span>VENDA DIARIA</span></div><div class="c" style="left:1656px;width:130px"><span>Vencido</span></div><div class="c" style="left:1786px;width:50px"><span>N</span></div></div>
<span class="abs dk" style="left:6px;top:601px;line-height:24px;text-decoration:underline">&nbsp;</span>
<div class="row lt u alt" style="top:624px"><div class="c" style="left:0px;width:30px;padding:0"></div><div class="c" style="left:30px;width:30px;padding:0"></div><div class="c" style="left:60px;width:30px;padding:0"></div><div class="c" style="left:90px;width:30px;padding:0"></div><svg class="ic" style="left:40px;top:6px" width="15" height="14" viewBox="0 0 15 14"><rect x="0" y="0" width="11.800" height="1.500" fill="#c6c6ea"/><rect x="0" y="1.500" width="11.800" height="9.700" fill="#e8f0fc"/><rect x="3.600" y="3.500" width="5.400" height="1.600" fill="#c6d8f5"/><rect x="3.600" y="7.300" width="5.400" height="1.600" fill="#c6d8f5"/><rect x="2" y="3.500" width=".8" height="1.600" fill="#d5e2f8"/><rect x="2" y="7.300" width=".8" height="1.600" fill="#d5e2f8"/><path d="M6.100 13l.8-2.200 5.200-4.900 1.400 1.400-5.200 4.900z" fill="#fcdfae"/><path d="M12.100 5.900l.9-.9 1.400 1.400-.9.900z" fill="#f8caca"/></svg><svg class="ic" style="left:69px;top:7px" width="16" height="11" viewBox="0 0 16 11"><path d="M.8 5.300C4 .2 12 .2 15.200 5.300" fill="none" stroke="#d5dadd" stroke-width="1.100"/><path d="M.8 5.300C4 10.500 12 10.500 15.200 5.300" fill="none" stroke="#eceff1" stroke-width=".8"/><circle cx="8" cy="5.400" r="3" fill="#b8e4ea"/><circle cx="8" cy="5.400" r="1.100" fill="#a9cdd3"/></svg><div class="c" style="left:120px;width:536px"><span>Cliente Padrão</span></div><div class="c" style="left:656px;width:120px"><span>CARTAO - [CREDITO]</span></div><div class="c r" style="left:776px;width:80px"><span>R$ 2.384,06</span></div><div class="c r" style="left:856px;width:100px"><span>R$ 2.384,06</span></div><div class="c" style="left:956px;width:100px"><span>&nbsp;</span></div><div class="c" style="left:1056px;width:50px"><span>Não</span></div><div class="c" style="left:1106px;width:100px"><span>22/08/2024</span></div><div class="c" style="left:1206px;width:100px"><span>21/09/2024</span></div><div class="c" style="left:1306px;width:150px"><span>MATRIZ</span></div><div class="c" style="left:1456px;width:200px"><span>VENDA DIARIA</span></div><div class="c" style="left:1656px;width:130px"><span>Vencido</span></div><div class="c" style="left:1786px;width:50px"><span>N</span></div></div>
<span class="abs lt" style="left:6px;top:626px;line-height:24px;text-decoration:underline">&nbsp;</span>
</div>
<div class="abs" style="left:0;top:194px;width:1863px;height:29px;background:#f5fafe;border-bottom:1px solid #eef3f9"></div>
<div class="abs" style="left:879px;top:194px;width:4px;height:24px;border:1px solid #f6c3b8;border-left:0;background:#fff"></div>
<span class="abs" style="left:889px;top:195px;line-height:24px;color:#b9b9b9">R$ 0,00</span>
<div class="abs" style="left:985px;top:194px;width:97px;height:24px;border:1px solid #ededed;background:#fff"></div>
<span class="abs" style="left:1089px;top:195px;line-height:24px;color:#b9b9b9">Não</span>
<div class="abs" style="left:1135px;top:194px;width:98px;height:24px;border:1px solid #f6c3b8;background:#fff"><i class="tri" style="right:7px;top:9px;border-top-color:#d4d4d4"></i></div>
<div class="abs" style="left:1235px;top:194px;width:98px;height:24px;border:1px solid #f6c3b8;background:#fff"><i class="tri" style="right:7px;top:9px;border-top-color:#d4d4d4"></i></div>
<div class="abs" style="left:1335px;top:194px;width:148px;height:24px;border:1px solid #f6c3b8;background:#fff"><i class="tri" style="right:7px;top:9px;border-top-color:#d4d4d4"></i></div>
<div class="abs" style="left:1485px;top:194px;width:198px;height:24px;border:1px solid #f6c3b8;background:#fff"><i class="tri" style="right:7px;top:9px;border-top-color:#d4d4d4"></i></div>
<svg class="ic" style="left:93px;top:201px" width="16" height="11" viewBox="0 0 16 11"><path d="M.8 5.300C4 .2 12 .2 15.200 5.300" fill="none" stroke="#d5dadd" stroke-width="1.100"/><path d="M.8 5.300C4 10.500 12 10.500 15.200 5.300" fill="none" stroke="#eceff1" stroke-width=".8"/><circle cx="8" cy="5.400" r="3" fill="#b8e4ea"/><circle cx="8" cy="5.400" r="1.100" fill="#a9cdd3"/></svg>
<div class="abs" style="left:800px;top:222px;width:214px;height:32px;background:#f5fafe;border:1px solid #eaf1f8;border-top:0;border-radius:0 0 4px 4px"></div>
<div class="abs" style="left:855px;top:227px;width:75px;height:22px;border-radius:3px;background:linear-gradient(68deg,#cde2ce,#d3f6d5);color:#fff;font-weight:bold;font-size:12px;line-height:22px;text-align:center">Salvar</div>
<div class="abs" style="left:934px;top:227px;width:75px;height:22px;border-radius:3px;background:linear-gradient(68deg,#dbb1b1,#f4b4b4);color:#fff;font-weight:bold;font-size:12px;line-height:22px;text-align:center">Cancelar</div>
<div class="abs" style="left:1863px;top:193px;width:15px;height:660px;background:#fcfcfc"></div>
<div class="abs" style="left:1868px;top:209px;width:7px;height:110px;border-radius:4px;background:#eaeff5"></div>
<svg class="abs" style="left:1867px;top:197px" width="9" height="6" viewBox="0 0 9 6"><path d="M1 5l3.500-3.500L8 5" fill="none" stroke="#d2d2d2" stroke-width="1.600"/></svg>
<svg class="abs" style="left:1867px;top:843px" width="9" height="6" viewBox="0 0 9 6"><path d="M1 1l3.500 3.500L8 1" fill="none" stroke="#d2d2d2" stroke-width="1.600"/></svg>
<div class="abs" style="left:0;top:853px;width:1878px;height:73px;background:#fbfbfb"></div>
<div class="abs" style="left:12px;top:864px;font-size:12px;line-height:15px;color:#c9c9c9;white-space:nowrap"><b style="color:#c4c4c4">Aberto:</b> R$ 2.720,34 <span style="color:#dcdcdc">|</span> <b style="color:#c4c4c4">Vencido:</b> R$ 88.907,23</div>
<div class="abs" style="right:13px;top:864px;font-size:13px;line-height:16px;color:#c3e6c0;white-space:nowrap">Soma seleção: R$ 0,00</div>
<svg class="abs" style="left:12px;top:903px" width="14" height="10" viewBox="0 0 14 10"><rect x="0" y="1" width="1.500" height="8" fill="#dcebf9"/><path d="M8 1v8L2 5zM14 1v8L8 5z" fill="#dcebf9"/></svg>
<svg class="abs" style="left:45px;top:903px" width="14" height="10" viewBox="0 0 14 10"><path d="M7 1v8L1 5zM14 1v8L7 5z" fill="#dcebf9"/></svg>
<div class="abs" style="left:72px;top:901px;width:1px;height:14px;background:#f0f0f0"></div>
<span class="abs" style="left:86px;top:901px;font-size:12px;line-height:15px;color:#cdcdcd">Página</span>
<div class="abs" style="left:131px;top:896px;width:30px;height:24px;border:1px solid #efefef;background:#fff"><span class="abs" style="left:6px;top:0;line-height:23px;font-size:12px;color:#c6c6c6">1</span></div>
<span class="abs" style="left:175px;top:901px;font-size:12px;line-height:15px;color:#cdcdcd">de 26</span>
<div class="abs" style="left:211px;top:901px;width:1px;height:14px;background:#f0f0f0"></div>
<svg class="abs" style="left:225px;top:903px" width="14" height="10" viewBox="0 0 14 10"><path d="M0 1v8l7-4zM7 1v8l7-4z" fill="#b9dcf7"/></svg>
<svg class="abs" style="left:258px;top:903px" width="14" height="10" viewBox="0 0 14 10"><path d="M0 1v8l6-4zM6 1v8l6-4z" fill="#b9dcf7"/><rect x="12.500" y="1" width="1.500" height="8" fill="#b9dcf7"/></svg>
<div class="abs" style="left:284px;top:901px;width:1px;height:14px;background:#f0f0f0"></div>
<svg class="abs" style="left:300px;top:900px" width="13" height="15" viewBox="0 0 13 15"><path d="M11.300 7V4.500a2.500 2.500 0 0 0-2.500-2.500H4.500M1.700 8v2.500a2.500 2.500 0 0 0 2.500 2.500h4.300" fill="none" stroke="#b7d8f5" stroke-width="1.700"/><path d="M5.500 0L2.300 2l3.200 2zM7.500 11l3.200 2-3.200 2z" fill="#b7d8f5"/></svg>
<span class="abs" style="left:320px;top:901px;font-size:12px;font-weight:bold;line-height:15px;color:#cfcfcf">Atualizar</span>
<svg class="abs" style="left:1010px;top:899px" width="11" height="17" viewBox="0 0 11 17"><path d="M5 0h5L6.500 6H10L2.500 17 4.500 9H1z" fill="#efefef"/></svg>
<span class="abs" style="left:1029px;top:901px;font-size:12px;font-weight:bold;line-height:15px;color:#e6e6e6">Desligado</span>
<span class="abs" style="right:5px;top:901px;font-size:12px;font-weight:bold;line-height:15px;color:#c8c8c8;white-space:nowrap">1 à 150 de 3899 registro(s)</span>
<svg class="abs" style="left:150px;top:600px" width="56" height="95" viewBox="0 0 56 95"><path d="M28.100 6L25.900 90.800" stroke="#cc0e0e" stroke-width="5.800" fill="none"/><path d="M8.300 25.600L28.200 4.300l18.600 22.700" stroke="#cc0e0e" stroke-width="5.800" fill="none" stroke-linecap="round" stroke-linejoin="miter"/></svg>
<div class="abs" style="left:128px;top:108px;width:750px;height:496px;border-radius:4px;box-shadow:0 0 6px #888"></div>
<div id="win"><div class="title">Contas a receber</div>
<svg class="abs" style="left:722px;top:8px" width="20" height="20" viewBox="0 0 20 20"><circle cx="9.850" cy="9.960" r="8" fill="#9fcbeb"/><path d="M5.600 5.700l8.500 8.500M14.100 5.700l-8.500 8.500" stroke="#3892d4" stroke-width="1.900"/></svg>
<div class="body"></div><div class="foot"></div>
<span class="lb" style="left:15px;top:59px">Natureza:</span>
<div class="in" style="left:15px;top:78px;width:693px;height:24px"><i class="tri" style="right:7px;top:9px"></i></div>
<span class="lb" style="left:15px;top:105px">Parceiro:</span>
<div class="in" style="left:15px;top:124px;width:693px;height:24px"><i class="tri" style="right:29px;top:9px"></i><svg class="abs" style="left:672px;top:3px" width="15" height="16" viewBox="816 232 15 16"><path d="M825.800 241.800l4.200 4" stroke="#37474f" stroke-width="1.600"/><circle cx="822.600" cy="238.600" r="4.700" fill="#64b5f6" stroke="#8e8e8e" stroke-width=".9"/><path d="M820.300 236.700a2.800 2.800 0 0 1 4.400-.2" stroke="#9dd0f9" stroke-width=".8" fill="none"/></svg></div>
<span class="lb" style="left:15px;top:151px">Entidade:</span>
<div class="in" style="left:15px;top:170px;width:342px;height:24px"><i class="tri" style="right:7px;top:9px"></i></div>
<span class="lb" style="left:367px;top:151px">Tipo Título:</span>
<div class="in" style="left:367px;top:170px;width:342px;height:24px"><i class="tri" style="right:7px;top:9px"></i></div>
<span class="lb" style="left:15px;top:197px">Dt. Emissão:</span>
<div class="in" style="left:15px;top:216px;width:225px;height:24px"><i class="tri" style="right:7px;top:9px"></i></div>
<span class="lb" style="left:250px;top:197px">Dt. Vencimento:</span>
<div class="in" style="left:250px;top:216px;width:225px;height:24px"><i class="tri" style="right:7px;top:9px"></i></div>
<span class="lb" style="left:485px;top:197px">Dt. Referência:</span>
<div class="in" style="left:485px;top:216px;width:225px;height:24px"><i class="tri" style="right:7px;top:9px"></i></div>
<span class="lb" style="left:15px;top:243px">Número:</span>
<div class="in" style="left:15px;top:262px;width:342px;height:24px"></div>
<span class="lb" style="left:367px;top:243px">Previsão:</span>
<div class="in" style="left:367px;top:262px;width:342px;height:24px"><span class="v" style="left:6px">Sim</span><i class="tri" style="right:7px;top:9px"></i></div>
<span class="lb" style="left:15px;top:289px">Forma Pagamento:</span>
<div class="in" style="left:15px;top:308px;width:342px;height:24px"><i class="tri" style="right:7px;top:9px"></i></div>
<span class="lb" style="left:367px;top:289px">Vl. Título:</span>
<div class="in" style="left:367px;top:308px;width:342px;height:24px"><span class="v" style="right:7px">R$ 0,00</span></div>
<span class="lb" style="left:15px;top:335px">Observação:</span>
<div class="in" style="left:15px;top:354px;width:695px;height:65px"></div>
<div class="abs" style="left:13px;top:458px;width:85px;height:30px;border-radius:3px;background:linear-gradient(68deg,#007600 0%,#04b004 55%,#00e208 100%);"><svg class="abs" style="left:11px;top:9px" width="8" height="12" viewBox="0 0 8 12"><path d="M1 .500l5.500 5.500L1 11.500" fill="none" stroke="#2f8fe2" stroke-width="1.400"/></svg><span class="abs" style="left:32px;top:0;line-height:30px;font-size:14px;font-weight:bold;color:#fff">Salvar</span></div>
<div class="abs" style="left:611px;top:457px;width:126px;height:32px;border:1px solid #e2e2e2;border-radius:3px;background:linear-gradient(#f8f8f8,#f5f5f5 50%,#ebebeb 51%,#f3f3f3)"><svg class="abs" style="left:8px;top:7px" width="16" height="16" viewBox="0 0 16 16"><circle cx="7" cy="7.900" r="7" fill="#4caf50"/><path d="M7 4.400v7M3.500 7.900h7" stroke="#fff" stroke-width="2"/></svg><span class="abs" style="left:32px;top:0;line-height:30px;font-size:14px;font-weight:bold;color:#585858">Salvar Novo</span></div>
</div>
</div></body></html>
